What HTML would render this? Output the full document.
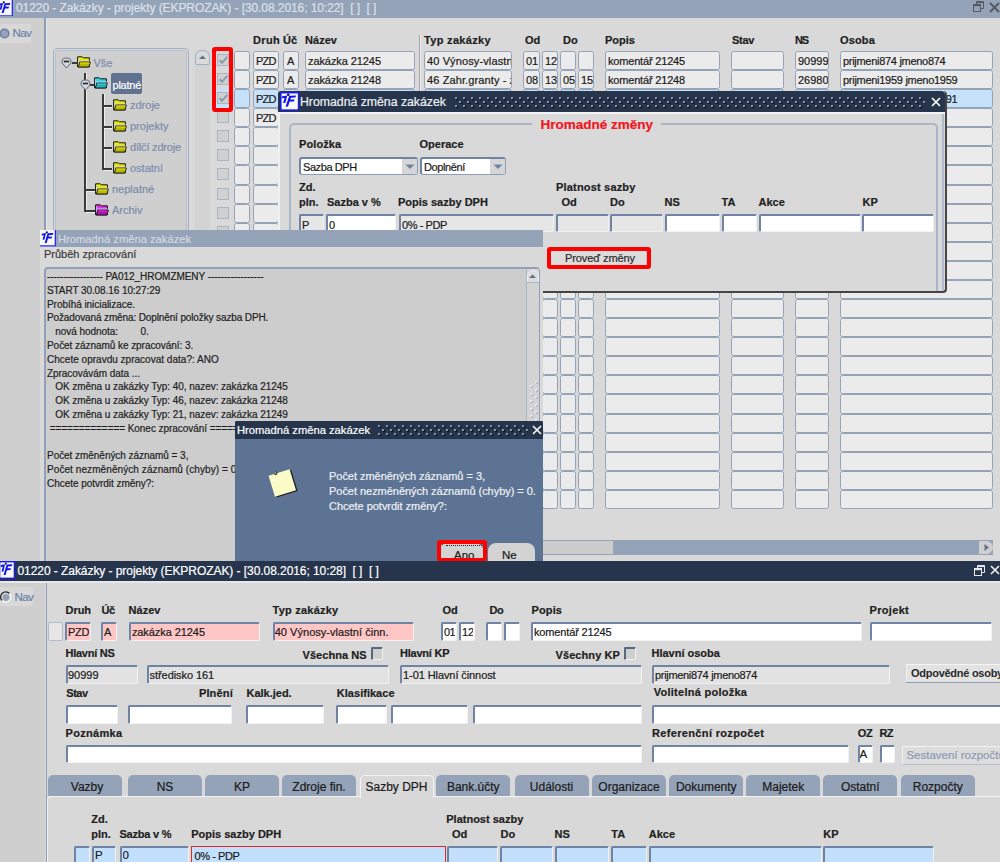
<!DOCTYPE html>
<html><head><meta charset="utf-8"><title>Zakázky</title>
<style>
html,body{margin:0;padding:0;width:1000px;height:862px;overflow:hidden;background:#d9d9d9;}
body{position:relative;font-family:"Liberation Sans", sans-serif;}
body>div,body>svg{position:absolute;}
.t{white-space:nowrap;-webkit-text-stroke:0.2px currentColor;}
.gf{border:1px solid;border-radius:2.5px;}
.if{border-style:solid;border-width:2px 1px 1px 2px;border-color:#6f84a4 #f2f2f2 #f2f2f2 #6f84a4;border-radius:2px;}
</style></head><body>
<div style="left:0px;top:0px;width:1000px;height:862px;background:#d9d9d9"></div>
<div style="left:0px;top:-2px;width:1000px;height:20px;background:#94a3b8"></div>
<svg style="position:absolute;left:-3px;top:-0.5px" width="16" height="16.6" viewBox="0 0 16 16.6" preserveAspectRatio="none"><rect x="0" y="0" width="16" height="16.6" fill="#f6f6f2"/><path d="M15.35 0 V15.95 H0" stroke="#2a2af0" stroke-width="1.3" fill="none"/><circle cx="6.8" cy="2.4" r="1.05" fill="#0c0c50"/><path d="M1.8 3.7 L6.0 3.1 L4.5 9.6 L2.5 9.8 L3.8 5.3 L1.6 5.5Z" fill="#1212ee"/><path d="M7.6 3.3 L13.3 3.1 L12.7 4.9 L9.0 5.0 L8.5 6.7 L12.0 6.6 L11.5 8.4 L8.0 8.5 L6.6 12.9 L4.6 13.0Z" fill="#1212ee"/></svg>
<div class="t" style="left:16px;top:2.04px;font-size:12px;line-height:12px;color:#dce1e8;letter-spacing:-0.077px;">01220 - Zakázky - projekty (EKPROZAK) - [30.08.2016; 10:22]&nbsp; [ ]&nbsp; [ ]</div>
<svg style="position:absolute;left:973px;top:1px" width="11" height="11"><path d="M3.5 3 V0.5 H10.5 V7.5 H8" stroke="#565a62" stroke-width="1" fill="none"/><path d="M3.5 1.5 H10.5" stroke="#565a62" stroke-width="1.2"/><rect x="0.5" y="3.5" width="7" height="7" stroke="#565a62" fill="none"/><path d="M0.5 4.6 H7.5" stroke="#565a62" stroke-width="1.2"/></svg>
<svg style="position:absolute;left:989px;top:2px" width="11" height="11"><path d="M1 1 L10 10 M10 1 L1 10" stroke="#565a62" stroke-width="2"/></svg>
<div style="left:0px;top:18px;width:44px;height:543px;background:#cfcfcf"></div>
<div style="left:44px;top:18px;width:2px;height:543px;background:#8d9db5"></div>
<div style="left:46px;top:18px;width:1px;height:543px;background:#e6e6e6"></div>
<div style="left:0px;top:24px;width:31px;height:19px;background:#d8d8d8"></div>
<svg style="position:absolute;left:-1px;top:28px" width="11" height="11"><circle cx="5.5" cy="5.5" r="4.3" fill="#94a3b8" stroke="#6a7fa0" stroke-width="1.4"/></svg>
<div class="t" style="left:12.5px;top:28.27px;font-size:11.5px;line-height:11.5px;color:#6b82a8;letter-spacing:-0.651px;">Nav</div>
<div style="left:53px;top:48px;width:136px;height:200px;border:1px solid #9fb0c6;border-radius:4px;box-sizing:border-box;"></div>
<div style="left:55px;top:50px;width:132px;height:196px;border:1px solid #b4c0d0;border-radius:3px;box-sizing:border-box;background:#cfcfcf"></div>
<svg style="position:absolute;left:61px;top:57px" width="11" height="12" viewBox="0 0 11 12"><path d="M1 4.5 Q1 1 5.5 1 Q10 1 10 4.5 V6 L5.5 11 L1 6Z" fill="#d5d5d5" stroke="#566a88" stroke-width="1"/><path d="M2.8 4.5 H8.2" stroke="#222" stroke-width="1.6"/></svg>
<div style="left:72px;top:62px;width:5px;height:2px;background:#3a3a3a"></div>
<svg style="position:absolute;left:77px;top:56px" width="14" height="12" viewBox="0 0 14 12"><path d="M0.6 0.8 H5.2 L6.2 1.8 H12.4 V10.9 H0.6Z" fill="#e8e800" stroke="#151515" stroke-width="1"/><path d="M1.6 2.4 V9" stroke="#c8c8ff" stroke-width="0.9"/><path d="M2.6 5.2 H12.8" stroke="#d4d4ff" stroke-width="1.3"/><path d="M2.8 6 H13.4 L11.9 11 H1.4Z" fill="#b8b800" stroke="#151515" stroke-width="0.9"/><path d="M3 7 H12.6" stroke="#e8e800" stroke-width="1"/></svg>
<div class="t" style="left:93.5px;top:57.89px;font-size:11px;line-height:11px;color:#7b8cab;">Vše</div>
<div style="left:84px;top:73px;width:2px;height:139px;background:#3a3a3a;box-shadow:1px 0 0 #f0f0f0"></div>
<svg style="position:absolute;left:80px;top:79px" width="11" height="12" viewBox="0 0 11 12"><path d="M1 4.5 Q1 1 5.5 1 Q10 1 10 4.5 V6 L5.5 11 L1 6Z" fill="#d5d5d5" stroke="#566a88" stroke-width="1"/><path d="M2.8 4.5 H8.2" stroke="#222" stroke-width="1.6"/></svg>
<div style="left:90px;top:84px;width:4px;height:2px;background:#3a3a3a"></div>
<svg style="position:absolute;left:94px;top:77px" width="14" height="12" viewBox="0 0 14 12"><path d="M0.6 0.8 H5.2 L6.2 1.8 H12.4 V10.9 H0.6Z" fill="#30d8e0" stroke="#151515" stroke-width="1"/><path d="M1.6 2.4 V9" stroke="#c8c8ff" stroke-width="0.9"/><path d="M2.6 5.2 H12.8" stroke="#d4d4ff" stroke-width="1.3"/><path d="M2.8 6 H13.4 L11.9 11 H1.4Z" fill="#20b0b8" stroke="#151515" stroke-width="0.9"/><path d="M3 7 H12.6" stroke="#30d8e0" stroke-width="1"/></svg>
<div style="left:111px;top:73px;width:31px;height:21px;background:#60728f;border-radius:2px"></div>
<div class="t" style="left:112.5px;top:79.69px;font-size:11px;line-height:11px;color:#ffffff;letter-spacing:-0.233px;">platné</div>
<div style="left:102px;top:94px;width:2px;height:76px;background:#3a3a3a;box-shadow:1px 0 0 #f0f0f0"></div>
<div style="left:104px;top:105px;width:8px;height:2px;background:#3a3a3a;box-shadow:0 1px 0 #f0f0f0"></div>
<svg style="position:absolute;left:113px;top:99px" width="14" height="12" viewBox="0 0 14 12"><path d="M0.6 0.8 H5.2 L6.2 1.8 H12.4 V10.9 H0.6Z" fill="#e8e800" stroke="#151515" stroke-width="1"/><path d="M1.6 2.4 V9" stroke="#c8c8ff" stroke-width="0.9"/><path d="M2.6 5.2 H12.8" stroke="#d4d4ff" stroke-width="1.3"/><path d="M2.8 6 H13.4 L11.9 11 H1.4Z" fill="#b8b800" stroke="#151515" stroke-width="0.9"/><path d="M3 7 H12.6" stroke="#e8e800" stroke-width="1"/></svg>
<div class="t" style="left:130px;top:100.19px;font-size:11px;line-height:11px;color:#7b8cab;">zdroje</div>
<div style="left:104px;top:126px;width:8px;height:2px;background:#3a3a3a;box-shadow:0 1px 0 #f0f0f0"></div>
<svg style="position:absolute;left:113px;top:120px" width="14" height="12" viewBox="0 0 14 12"><path d="M0.6 0.8 H5.2 L6.2 1.8 H12.4 V10.9 H0.6Z" fill="#e8e800" stroke="#151515" stroke-width="1"/><path d="M1.6 2.4 V9" stroke="#c8c8ff" stroke-width="0.9"/><path d="M2.6 5.2 H12.8" stroke="#d4d4ff" stroke-width="1.3"/><path d="M2.8 6 H13.4 L11.9 11 H1.4Z" fill="#b8b800" stroke="#151515" stroke-width="0.9"/><path d="M3 7 H12.6" stroke="#e8e800" stroke-width="1"/></svg>
<div class="t" style="left:130px;top:121.19px;font-size:11px;line-height:11px;color:#7b8cab;">projekty</div>
<div style="left:104px;top:147px;width:8px;height:2px;background:#3a3a3a;box-shadow:0 1px 0 #f0f0f0"></div>
<svg style="position:absolute;left:113px;top:141px" width="14" height="12" viewBox="0 0 14 12"><path d="M0.6 0.8 H5.2 L6.2 1.8 H12.4 V10.9 H0.6Z" fill="#e8e800" stroke="#151515" stroke-width="1"/><path d="M1.6 2.4 V9" stroke="#c8c8ff" stroke-width="0.9"/><path d="M2.6 5.2 H12.8" stroke="#d4d4ff" stroke-width="1.3"/><path d="M2.8 6 H13.4 L11.9 11 H1.4Z" fill="#b8b800" stroke="#151515" stroke-width="0.9"/><path d="M3 7 H12.6" stroke="#e8e800" stroke-width="1"/></svg>
<div class="t" style="left:130px;top:142.19px;font-size:11px;line-height:11px;color:#7b8cab;letter-spacing:-0.185px;">dílčí zdroje</div>
<div style="left:104px;top:168px;width:8px;height:2px;background:#3a3a3a;box-shadow:0 1px 0 #f0f0f0"></div>
<svg style="position:absolute;left:113px;top:162px" width="14" height="12" viewBox="0 0 14 12"><path d="M0.6 0.8 H5.2 L6.2 1.8 H12.4 V10.9 H0.6Z" fill="#e8e800" stroke="#151515" stroke-width="1"/><path d="M1.6 2.4 V9" stroke="#c8c8ff" stroke-width="0.9"/><path d="M2.6 5.2 H12.8" stroke="#d4d4ff" stroke-width="1.3"/><path d="M2.8 6 H13.4 L11.9 11 H1.4Z" fill="#b8b800" stroke="#151515" stroke-width="0.9"/><path d="M3 7 H12.6" stroke="#e8e800" stroke-width="1"/></svg>
<div class="t" style="left:130px;top:163.19px;font-size:11px;line-height:11px;color:#7b8cab;">ostatní</div>
<div style="left:86px;top:189px;width:9px;height:2px;background:#3a3a3a;box-shadow:0 1px 0 #f0f0f0"></div>
<svg style="position:absolute;left:95px;top:183px" width="14" height="12" viewBox="0 0 14 12"><path d="M0.6 0.8 H5.2 L6.2 1.8 H12.4 V10.9 H0.6Z" fill="#e8e800" stroke="#151515" stroke-width="1"/><path d="M1.6 2.4 V9" stroke="#c8c8ff" stroke-width="0.9"/><path d="M2.6 5.2 H12.8" stroke="#d4d4ff" stroke-width="1.3"/><path d="M2.8 6 H13.4 L11.9 11 H1.4Z" fill="#b8b800" stroke="#151515" stroke-width="0.9"/><path d="M3 7 H12.6" stroke="#e8e800" stroke-width="1"/></svg>
<div class="t" style="left:112px;top:184.19px;font-size:11px;line-height:11px;color:#7b8cab;">neplatné</div>
<div style="left:86px;top:210px;width:9px;height:2px;background:#3a3a3a;box-shadow:0 1px 0 #f0f0f0"></div>
<svg style="position:absolute;left:95px;top:204px" width="14" height="12" viewBox="0 0 14 12"><path d="M0.6 0.8 H5.2 L6.2 1.8 H12.4 V10.9 H0.6Z" fill="#e030e0" stroke="#151515" stroke-width="1"/><path d="M1.6 2.4 V9" stroke="#c8c8ff" stroke-width="0.9"/><path d="M2.6 5.2 H12.8" stroke="#d4d4ff" stroke-width="1.3"/><path d="M2.8 6 H13.4 L11.9 11 H1.4Z" fill="#b010b0" stroke="#151515" stroke-width="0.9"/><path d="M3 7 H12.6" stroke="#e030e0" stroke-width="1"/></svg>
<div class="t" style="left:112px;top:205.19px;font-size:11px;line-height:11px;color:#7b8cab;">Archiv</div>
<div style="left:195px;top:50px;width:15px;height:500px;background:#d3d3d3"></div>
<div style="left:195px;top:50px;width:15px;height:15px;background:#dadada;border:1px solid #9fb0c6;border-radius:7px 7px 2px 2px;box-sizing:border-box"></div>
<svg style="position:absolute;left:198px;top:53px" width="9" height="9"><path d="M1 6 L4.5 2.5 L8 6Z" fill="#60728f"/></svg>
<div class="t" style="left:253px;top:34.69px;font-size:11px;line-height:11px;font-weight:bold;color:#1e1e1e;letter-spacing:0.336px;">Druh</div>
<div class="t" style="left:283px;top:34.69px;font-size:11px;line-height:11px;font-weight:bold;color:#1e1e1e;letter-spacing:-0.031px;">Úč</div>
<div class="t" style="left:305px;top:34.69px;font-size:11px;line-height:11px;font-weight:bold;color:#1e1e1e;letter-spacing:0.037px;">Název</div>
<div class="t" style="left:424px;top:34.69px;font-size:11px;line-height:11px;font-weight:bold;color:#1e1e1e;letter-spacing:0.324px;">Typ zakázky</div>
<div class="t" style="left:525px;top:34.69px;font-size:11px;line-height:11px;font-weight:bold;color:#1e1e1e;letter-spacing:-0.141px;">Od</div>
<div class="t" style="left:563px;top:34.69px;font-size:11px;line-height:11px;font-weight:bold;color:#1e1e1e;letter-spacing:0.172px;">Do</div>
<div class="t" style="left:605px;top:34.69px;font-size:11px;line-height:11px;font-weight:bold;color:#1e1e1e;letter-spacing:0.006px;">Popis</div>
<div class="t" style="left:732px;top:34.69px;font-size:11px;line-height:11px;font-weight:bold;color:#1e1e1e;letter-spacing:-0.312px;">Stav</div>
<div class="t" style="left:795px;top:34.69px;font-size:11px;line-height:11px;font-weight:bold;color:#1e1e1e;letter-spacing:-1.141px;">NS</div>
<div class="t" style="left:840px;top:34.69px;font-size:11px;line-height:11px;font-weight:bold;color:#1e1e1e;letter-spacing:0.150px;">Osoba</div>
<div style="left:419px;top:35px;width:1px;height:260px;background:#a6a6a6"></div>
<div style="left:420px;top:35px;width:1px;height:260px;background:#efefef"></div>
<div style="left:217px;top:54px;width:12px;height:12px;border:1px solid #a9b5c6;box-sizing:border-box;background:#d0d0d0"></div>
<svg style="position:absolute;left:217px;top:54px" width="12" height="12"><path d="M2.6 6.2 L5 8.8 L10.2 2.8" stroke="#8a9ab2" stroke-width="2" fill="none"/></svg>
<div class="gf" style="left:234px;top:51px;width:14px;height:17px;background:#ebebeb;border-color:#94a3b8"></div>
<div class="gf" style="left:253px;top:51px;width:24px;height:17px;background:#ebebeb;border-color:#94a3b8"></div>
<div class="t" style="left:256px;top:56.29px;font-size:11px;line-height:11px;color:#1a1a1a;width:22px;overflow:hidden;letter-spacing:-0.833px;">PZD</div>
<div class="gf" style="left:283px;top:51px;width:14px;height:17px;background:#ebebeb;border-color:#94a3b8"></div>
<div class="t" style="left:287px;top:56.29px;font-size:11px;line-height:11px;color:#1a1a1a;width:11px;overflow:hidden;">A</div>
<div class="gf" style="left:305px;top:51px;width:108px;height:17px;background:#ebebeb;border-color:#94a3b8"></div>
<div class="t" style="left:308px;top:56.29px;font-size:11px;line-height:11px;color:#1a1a1a;width:106px;overflow:hidden;letter-spacing:-0.082px;">zakázka 21245</div>
<div class="gf" style="left:424px;top:51px;width:86px;height:17px;background:#ebebeb;border-color:#94a3b8"></div>
<div class="t" style="left:427px;top:56.29px;font-size:11px;line-height:11px;color:#1a1a1a;width:84px;overflow:hidden;letter-spacing:0.121px;">40 Výnosy-vlastní činn.</div>
<div class="gf" style="left:523px;top:51px;width:15px;height:17px;background:#ebebeb;border-color:#94a3b8"></div>
<div class="t" style="left:526px;top:56.29px;font-size:11px;line-height:11px;color:#1a1a1a;width:13px;overflow:hidden;">01</div>
<div class="gf" style="left:542px;top:51px;width:14px;height:17px;background:#ebebeb;border-color:#94a3b8"></div>
<div class="t" style="left:545px;top:56.29px;font-size:11px;line-height:11px;color:#1a1a1a;width:12px;overflow:hidden;">12</div>
<div class="gf" style="left:560px;top:51px;width:14px;height:17px;background:#ebebeb;border-color:#94a3b8"></div>
<div class="gf" style="left:578px;top:51px;width:14px;height:17px;background:#ebebeb;border-color:#94a3b8"></div>
<div class="gf" style="left:605px;top:51px;width:113px;height:17px;background:#ebebeb;border-color:#94a3b8"></div>
<div class="t" style="left:608px;top:56.29px;font-size:11px;line-height:11px;color:#1a1a1a;width:111px;overflow:hidden;letter-spacing:-0.183px;">komentář 21245</div>
<div class="gf" style="left:731px;top:51px;width:51px;height:17px;background:#ebebeb;border-color:#94a3b8"></div>
<div class="gf" style="left:795px;top:51px;width:32px;height:17px;background:#ebebeb;border-color:#94a3b8"></div>
<div class="t" style="left:798px;top:56.29px;font-size:11px;line-height:11px;color:#1a1a1a;width:30px;overflow:hidden;">90999</div>
<div class="gf" style="left:840px;top:51px;width:151px;height:17px;background:#ebebeb;border-color:#94a3b8"></div>
<div class="t" style="left:843px;top:56.29px;font-size:11px;line-height:11px;color:#1a1a1a;width:149px;overflow:hidden;letter-spacing:-0.294px;">prijmeni874 jmeno874</div>
<div style="left:217px;top:73px;width:12px;height:12px;border:1px solid #a9b5c6;box-sizing:border-box;background:#d0d0d0"></div>
<svg style="position:absolute;left:217px;top:73px" width="12" height="12"><path d="M2.6 6.2 L5 8.8 L10.2 2.8" stroke="#8a9ab2" stroke-width="2" fill="none"/></svg>
<div class="gf" style="left:234px;top:70px;width:14px;height:17px;background:#ebebeb;border-color:#94a3b8"></div>
<div class="gf" style="left:253px;top:70px;width:24px;height:17px;background:#ebebeb;border-color:#94a3b8"></div>
<div class="t" style="left:256px;top:75.29px;font-size:11px;line-height:11px;color:#1a1a1a;width:22px;overflow:hidden;letter-spacing:-0.833px;">PZD</div>
<div class="gf" style="left:283px;top:70px;width:14px;height:17px;background:#ebebeb;border-color:#94a3b8"></div>
<div class="t" style="left:287px;top:75.29px;font-size:11px;line-height:11px;color:#1a1a1a;width:11px;overflow:hidden;">A</div>
<div class="gf" style="left:305px;top:70px;width:108px;height:17px;background:#ebebeb;border-color:#94a3b8"></div>
<div class="t" style="left:308px;top:75.29px;font-size:11px;line-height:11px;color:#1a1a1a;width:106px;overflow:hidden;letter-spacing:-0.082px;">zakázka 21248</div>
<div class="gf" style="left:424px;top:70px;width:86px;height:17px;background:#ebebeb;border-color:#94a3b8"></div>
<div class="t" style="left:427px;top:75.29px;font-size:11px;line-height:11px;color:#1a1a1a;width:84px;overflow:hidden;letter-spacing:0.112px;">46 Zahr.granty - zahr.</div>
<div class="gf" style="left:523px;top:70px;width:15px;height:17px;background:#ebebeb;border-color:#94a3b8"></div>
<div class="t" style="left:526px;top:75.29px;font-size:11px;line-height:11px;color:#1a1a1a;width:13px;overflow:hidden;">08</div>
<div class="gf" style="left:542px;top:70px;width:14px;height:17px;background:#ebebeb;border-color:#94a3b8"></div>
<div class="t" style="left:545px;top:75.29px;font-size:11px;line-height:11px;color:#1a1a1a;width:12px;overflow:hidden;">13</div>
<div class="gf" style="left:560px;top:70px;width:14px;height:17px;background:#ebebeb;border-color:#94a3b8"></div>
<div class="t" style="left:563px;top:75.29px;font-size:11px;line-height:11px;color:#1a1a1a;width:12px;overflow:hidden;">05</div>
<div class="gf" style="left:578px;top:70px;width:14px;height:17px;background:#ebebeb;border-color:#94a3b8"></div>
<div class="t" style="left:581px;top:75.29px;font-size:11px;line-height:11px;color:#1a1a1a;width:12px;overflow:hidden;">15</div>
<div class="gf" style="left:605px;top:70px;width:113px;height:17px;background:#ebebeb;border-color:#94a3b8"></div>
<div class="t" style="left:608px;top:75.29px;font-size:11px;line-height:11px;color:#1a1a1a;width:111px;overflow:hidden;letter-spacing:-0.183px;">komentář 21248</div>
<div class="gf" style="left:731px;top:70px;width:51px;height:17px;background:#ebebeb;border-color:#94a3b8"></div>
<div class="gf" style="left:795px;top:70px;width:32px;height:17px;background:#ebebeb;border-color:#94a3b8"></div>
<div class="t" style="left:798px;top:75.29px;font-size:11px;line-height:11px;color:#1a1a1a;width:30px;overflow:hidden;">26980</div>
<div class="gf" style="left:840px;top:70px;width:151px;height:17px;background:#ebebeb;border-color:#94a3b8"></div>
<div class="t" style="left:843px;top:75.29px;font-size:11px;line-height:11px;color:#1a1a1a;width:149px;overflow:hidden;letter-spacing:-0.279px;">prijmeni1959 jmeno1959</div>
<div style="left:214px;top:89px;width:18px;height:19px;background:#c6e2fb"></div>
<div style="left:217px;top:92px;width:12px;height:12px;border:1px solid #a9b5c6;box-sizing:border-box;background:#d0d0d0"></div>
<svg style="position:absolute;left:217px;top:92px" width="12" height="12"><path d="M2.6 6.2 L5 8.8 L10.2 2.8" stroke="#8a9ab2" stroke-width="2" fill="none"/></svg>
<div class="gf" style="left:234px;top:89px;width:14px;height:17px;background:#c6e2fb;border-color:#94a3b8"></div>
<div class="gf" style="left:253px;top:89px;width:24px;height:17px;background:#c6e2fb;border-color:#94a3b8"></div>
<div class="t" style="left:256px;top:94.29px;font-size:11px;line-height:11px;color:#1a1a1a;width:22px;overflow:hidden;letter-spacing:-0.833px;">PZD</div>
<div class="gf" style="left:283px;top:89px;width:14px;height:17px;background:#c6e2fb;border-color:#94a3b8"></div>
<div class="t" style="left:287px;top:94.29px;font-size:11px;line-height:11px;color:#1a1a1a;width:11px;overflow:hidden;">A</div>
<div class="gf" style="left:305px;top:89px;width:108px;height:17px;background:#c6e2fb;border-color:#94a3b8"></div>
<div class="t" style="left:308px;top:94.29px;font-size:11px;line-height:11px;color:#1a1a1a;width:106px;overflow:hidden;letter-spacing:-0.082px;">zakázka 21249</div>
<div class="gf" style="left:424px;top:89px;width:86px;height:17px;background:#c6e2fb;border-color:#94a3b8"></div>
<div class="t" style="left:427px;top:94.29px;font-size:11px;line-height:11px;color:#1a1a1a;width:84px;overflow:hidden;">21 Dotace</div>
<div class="gf" style="left:523px;top:89px;width:15px;height:17px;background:#c6e2fb;border-color:#94a3b8"></div>
<div class="t" style="left:526px;top:94.29px;font-size:11px;line-height:11px;color:#1a1a1a;width:13px;overflow:hidden;">01</div>
<div class="gf" style="left:542px;top:89px;width:14px;height:17px;background:#c6e2fb;border-color:#94a3b8"></div>
<div class="t" style="left:545px;top:94.29px;font-size:11px;line-height:11px;color:#1a1a1a;width:12px;overflow:hidden;">12</div>
<div class="gf" style="left:560px;top:89px;width:14px;height:17px;background:#c6e2fb;border-color:#94a3b8"></div>
<div class="gf" style="left:578px;top:89px;width:14px;height:17px;background:#c6e2fb;border-color:#94a3b8"></div>
<div class="gf" style="left:605px;top:89px;width:113px;height:17px;background:#c6e2fb;border-color:#94a3b8"></div>
<div class="t" style="left:608px;top:94.29px;font-size:11px;line-height:11px;color:#1a1a1a;width:111px;overflow:hidden;letter-spacing:-0.183px;">komentář 21249</div>
<div class="gf" style="left:731px;top:89px;width:51px;height:17px;background:#c6e2fb;border-color:#94a3b8"></div>
<div class="gf" style="left:795px;top:89px;width:32px;height:17px;background:#c6e2fb;border-color:#94a3b8"></div>
<div class="t" style="left:798px;top:94.29px;font-size:11px;line-height:11px;color:#1a1a1a;width:30px;overflow:hidden;">11111</div>
<div class="gf" style="left:840px;top:89px;width:151px;height:17px;background:#c6e2fb;border-color:#94a3b8"></div>
<div class="t" style="left:843px;top:94.29px;font-size:11px;line-height:11px;color:#1a1a1a;width:149px;overflow:hidden;letter-spacing:-0.279px;">prijmeni1591 jmeno1591</div>
<div style="left:217px;top:111px;width:12px;height:12px;border:1px solid #a9b5c6;box-sizing:border-box;background:#d0d0d0"></div>
<div class="gf" style="left:234px;top:108px;width:14px;height:17px;background:#ebebeb;border-color:#94a3b8"></div>
<div class="gf" style="left:253px;top:108px;width:24px;height:17px;background:#ebebeb;border-color:#94a3b8"></div>
<div class="t" style="left:256px;top:113.29px;font-size:11px;line-height:11px;color:#1a1a1a;width:22px;overflow:hidden;letter-spacing:-0.833px;">PZD</div>
<div class="gf" style="left:283px;top:108px;width:14px;height:17px;background:#ebebeb;border-color:#94a3b8"></div>
<div class="gf" style="left:305px;top:108px;width:108px;height:17px;background:#ebebeb;border-color:#94a3b8"></div>
<div class="gf" style="left:424px;top:108px;width:86px;height:17px;background:#ebebeb;border-color:#94a3b8"></div>
<div class="gf" style="left:523px;top:108px;width:15px;height:17px;background:#ebebeb;border-color:#94a3b8"></div>
<div class="gf" style="left:542px;top:108px;width:14px;height:17px;background:#ebebeb;border-color:#94a3b8"></div>
<div class="gf" style="left:560px;top:108px;width:14px;height:17px;background:#ebebeb;border-color:#94a3b8"></div>
<div class="gf" style="left:578px;top:108px;width:14px;height:17px;background:#ebebeb;border-color:#94a3b8"></div>
<div class="gf" style="left:605px;top:108px;width:113px;height:17px;background:#ebebeb;border-color:#94a3b8"></div>
<div class="gf" style="left:731px;top:108px;width:51px;height:17px;background:#ebebeb;border-color:#94a3b8"></div>
<div class="gf" style="left:795px;top:108px;width:32px;height:17px;background:#ebebeb;border-color:#94a3b8"></div>
<div class="gf" style="left:840px;top:108px;width:151px;height:17px;background:#ebebeb;border-color:#94a3b8"></div>
<div style="left:217px;top:130px;width:12px;height:12px;border:1px solid #a9b5c6;box-sizing:border-box;background:#d0d0d0"></div>
<div class="gf" style="left:234px;top:127px;width:14px;height:17px;background:#ebebeb;border-color:#94a3b8"></div>
<div class="gf" style="left:253px;top:127px;width:24px;height:17px;background:#ebebeb;border-color:#94a3b8"></div>
<div class="gf" style="left:283px;top:127px;width:14px;height:17px;background:#ebebeb;border-color:#94a3b8"></div>
<div class="gf" style="left:305px;top:127px;width:108px;height:17px;background:#ebebeb;border-color:#94a3b8"></div>
<div class="gf" style="left:424px;top:127px;width:86px;height:17px;background:#ebebeb;border-color:#94a3b8"></div>
<div class="gf" style="left:523px;top:127px;width:15px;height:17px;background:#ebebeb;border-color:#94a3b8"></div>
<div class="gf" style="left:542px;top:127px;width:14px;height:17px;background:#ebebeb;border-color:#94a3b8"></div>
<div class="gf" style="left:560px;top:127px;width:14px;height:17px;background:#ebebeb;border-color:#94a3b8"></div>
<div class="gf" style="left:578px;top:127px;width:14px;height:17px;background:#ebebeb;border-color:#94a3b8"></div>
<div class="gf" style="left:605px;top:127px;width:113px;height:17px;background:#ebebeb;border-color:#94a3b8"></div>
<div class="gf" style="left:731px;top:127px;width:51px;height:17px;background:#ebebeb;border-color:#94a3b8"></div>
<div class="gf" style="left:795px;top:127px;width:32px;height:17px;background:#ebebeb;border-color:#94a3b8"></div>
<div class="gf" style="left:840px;top:127px;width:151px;height:17px;background:#ebebeb;border-color:#94a3b8"></div>
<div style="left:217px;top:149px;width:12px;height:12px;border:1px solid #a9b5c6;box-sizing:border-box;background:#d0d0d0"></div>
<div class="gf" style="left:234px;top:146px;width:14px;height:17px;background:#ebebeb;border-color:#94a3b8"></div>
<div class="gf" style="left:253px;top:146px;width:24px;height:17px;background:#ebebeb;border-color:#94a3b8"></div>
<div class="gf" style="left:283px;top:146px;width:14px;height:17px;background:#ebebeb;border-color:#94a3b8"></div>
<div class="gf" style="left:305px;top:146px;width:108px;height:17px;background:#ebebeb;border-color:#94a3b8"></div>
<div class="gf" style="left:424px;top:146px;width:86px;height:17px;background:#ebebeb;border-color:#94a3b8"></div>
<div class="gf" style="left:523px;top:146px;width:15px;height:17px;background:#ebebeb;border-color:#94a3b8"></div>
<div class="gf" style="left:542px;top:146px;width:14px;height:17px;background:#ebebeb;border-color:#94a3b8"></div>
<div class="gf" style="left:560px;top:146px;width:14px;height:17px;background:#ebebeb;border-color:#94a3b8"></div>
<div class="gf" style="left:578px;top:146px;width:14px;height:17px;background:#ebebeb;border-color:#94a3b8"></div>
<div class="gf" style="left:605px;top:146px;width:113px;height:17px;background:#ebebeb;border-color:#94a3b8"></div>
<div class="gf" style="left:731px;top:146px;width:51px;height:17px;background:#ebebeb;border-color:#94a3b8"></div>
<div class="gf" style="left:795px;top:146px;width:32px;height:17px;background:#ebebeb;border-color:#94a3b8"></div>
<div class="gf" style="left:840px;top:146px;width:151px;height:17px;background:#ebebeb;border-color:#94a3b8"></div>
<div style="left:217px;top:168px;width:12px;height:12px;border:1px solid #a9b5c6;box-sizing:border-box;background:#d0d0d0"></div>
<div class="gf" style="left:234px;top:165px;width:14px;height:18px;background:#ebebeb;border-color:#94a3b8"></div>
<div class="gf" style="left:253px;top:165px;width:24px;height:18px;background:#ebebeb;border-color:#94a3b8"></div>
<div class="gf" style="left:283px;top:165px;width:14px;height:18px;background:#ebebeb;border-color:#94a3b8"></div>
<div class="gf" style="left:305px;top:165px;width:108px;height:18px;background:#ebebeb;border-color:#94a3b8"></div>
<div class="gf" style="left:424px;top:165px;width:86px;height:18px;background:#ebebeb;border-color:#94a3b8"></div>
<div class="gf" style="left:523px;top:165px;width:15px;height:18px;background:#ebebeb;border-color:#94a3b8"></div>
<div class="gf" style="left:542px;top:165px;width:14px;height:18px;background:#ebebeb;border-color:#94a3b8"></div>
<div class="gf" style="left:560px;top:165px;width:14px;height:18px;background:#ebebeb;border-color:#94a3b8"></div>
<div class="gf" style="left:578px;top:165px;width:14px;height:18px;background:#ebebeb;border-color:#94a3b8"></div>
<div class="gf" style="left:605px;top:165px;width:113px;height:18px;background:#ebebeb;border-color:#94a3b8"></div>
<div class="gf" style="left:731px;top:165px;width:51px;height:18px;background:#ebebeb;border-color:#94a3b8"></div>
<div class="gf" style="left:795px;top:165px;width:32px;height:18px;background:#ebebeb;border-color:#94a3b8"></div>
<div class="gf" style="left:840px;top:165px;width:151px;height:18px;background:#ebebeb;border-color:#94a3b8"></div>
<div style="left:217px;top:188px;width:12px;height:12px;border:1px solid #a9b5c6;box-sizing:border-box;background:#d0d0d0"></div>
<div class="gf" style="left:234px;top:185px;width:14px;height:17px;background:#ebebeb;border-color:#94a3b8"></div>
<div class="gf" style="left:253px;top:185px;width:24px;height:17px;background:#ebebeb;border-color:#94a3b8"></div>
<div class="gf" style="left:283px;top:185px;width:14px;height:17px;background:#ebebeb;border-color:#94a3b8"></div>
<div class="gf" style="left:305px;top:185px;width:108px;height:17px;background:#ebebeb;border-color:#94a3b8"></div>
<div class="gf" style="left:424px;top:185px;width:86px;height:17px;background:#ebebeb;border-color:#94a3b8"></div>
<div class="gf" style="left:523px;top:185px;width:15px;height:17px;background:#ebebeb;border-color:#94a3b8"></div>
<div class="gf" style="left:542px;top:185px;width:14px;height:17px;background:#ebebeb;border-color:#94a3b8"></div>
<div class="gf" style="left:560px;top:185px;width:14px;height:17px;background:#ebebeb;border-color:#94a3b8"></div>
<div class="gf" style="left:578px;top:185px;width:14px;height:17px;background:#ebebeb;border-color:#94a3b8"></div>
<div class="gf" style="left:605px;top:185px;width:113px;height:17px;background:#ebebeb;border-color:#94a3b8"></div>
<div class="gf" style="left:731px;top:185px;width:51px;height:17px;background:#ebebeb;border-color:#94a3b8"></div>
<div class="gf" style="left:795px;top:185px;width:32px;height:17px;background:#ebebeb;border-color:#94a3b8"></div>
<div class="gf" style="left:840px;top:185px;width:151px;height:17px;background:#ebebeb;border-color:#94a3b8"></div>
<div style="left:217px;top:207px;width:12px;height:12px;border:1px solid #a9b5c6;box-sizing:border-box;background:#d0d0d0"></div>
<div class="gf" style="left:234px;top:204px;width:14px;height:17px;background:#ebebeb;border-color:#94a3b8"></div>
<div class="gf" style="left:253px;top:204px;width:24px;height:17px;background:#ebebeb;border-color:#94a3b8"></div>
<div class="gf" style="left:283px;top:204px;width:14px;height:17px;background:#ebebeb;border-color:#94a3b8"></div>
<div class="gf" style="left:305px;top:204px;width:108px;height:17px;background:#ebebeb;border-color:#94a3b8"></div>
<div class="gf" style="left:424px;top:204px;width:86px;height:17px;background:#ebebeb;border-color:#94a3b8"></div>
<div class="gf" style="left:523px;top:204px;width:15px;height:17px;background:#ebebeb;border-color:#94a3b8"></div>
<div class="gf" style="left:542px;top:204px;width:14px;height:17px;background:#ebebeb;border-color:#94a3b8"></div>
<div class="gf" style="left:560px;top:204px;width:14px;height:17px;background:#ebebeb;border-color:#94a3b8"></div>
<div class="gf" style="left:578px;top:204px;width:14px;height:17px;background:#ebebeb;border-color:#94a3b8"></div>
<div class="gf" style="left:605px;top:204px;width:113px;height:17px;background:#ebebeb;border-color:#94a3b8"></div>
<div class="gf" style="left:731px;top:204px;width:51px;height:17px;background:#ebebeb;border-color:#94a3b8"></div>
<div class="gf" style="left:795px;top:204px;width:32px;height:17px;background:#ebebeb;border-color:#94a3b8"></div>
<div class="gf" style="left:840px;top:204px;width:151px;height:17px;background:#ebebeb;border-color:#94a3b8"></div>
<div style="left:217px;top:226px;width:12px;height:12px;border:1px solid #a9b5c6;box-sizing:border-box;background:#d0d0d0"></div>
<div class="gf" style="left:234px;top:223px;width:14px;height:17px;background:#ebebeb;border-color:#94a3b8"></div>
<div class="gf" style="left:253px;top:223px;width:24px;height:17px;background:#ebebeb;border-color:#94a3b8"></div>
<div class="gf" style="left:283px;top:223px;width:14px;height:17px;background:#ebebeb;border-color:#94a3b8"></div>
<div class="gf" style="left:305px;top:223px;width:108px;height:17px;background:#ebebeb;border-color:#94a3b8"></div>
<div class="gf" style="left:424px;top:223px;width:86px;height:17px;background:#ebebeb;border-color:#94a3b8"></div>
<div class="gf" style="left:523px;top:223px;width:15px;height:17px;background:#ebebeb;border-color:#94a3b8"></div>
<div class="gf" style="left:542px;top:223px;width:14px;height:17px;background:#ebebeb;border-color:#94a3b8"></div>
<div class="gf" style="left:560px;top:223px;width:14px;height:17px;background:#ebebeb;border-color:#94a3b8"></div>
<div class="gf" style="left:578px;top:223px;width:14px;height:17px;background:#ebebeb;border-color:#94a3b8"></div>
<div class="gf" style="left:605px;top:223px;width:113px;height:17px;background:#ebebeb;border-color:#94a3b8"></div>
<div class="gf" style="left:731px;top:223px;width:51px;height:17px;background:#ebebeb;border-color:#94a3b8"></div>
<div class="gf" style="left:795px;top:223px;width:32px;height:17px;background:#ebebeb;border-color:#94a3b8"></div>
<div class="gf" style="left:840px;top:223px;width:151px;height:17px;background:#ebebeb;border-color:#94a3b8"></div>
<div style="left:217px;top:245px;width:12px;height:12px;border:1px solid #a9b5c6;box-sizing:border-box;background:#d0d0d0"></div>
<div class="gf" style="left:234px;top:242px;width:14px;height:17px;background:#ebebeb;border-color:#94a3b8"></div>
<div class="gf" style="left:253px;top:242px;width:24px;height:17px;background:#ebebeb;border-color:#94a3b8"></div>
<div class="gf" style="left:283px;top:242px;width:14px;height:17px;background:#ebebeb;border-color:#94a3b8"></div>
<div class="gf" style="left:305px;top:242px;width:108px;height:17px;background:#ebebeb;border-color:#94a3b8"></div>
<div class="gf" style="left:424px;top:242px;width:86px;height:17px;background:#ebebeb;border-color:#94a3b8"></div>
<div class="gf" style="left:523px;top:242px;width:15px;height:17px;background:#ebebeb;border-color:#94a3b8"></div>
<div class="gf" style="left:542px;top:242px;width:14px;height:17px;background:#ebebeb;border-color:#94a3b8"></div>
<div class="gf" style="left:560px;top:242px;width:14px;height:17px;background:#ebebeb;border-color:#94a3b8"></div>
<div class="gf" style="left:578px;top:242px;width:14px;height:17px;background:#ebebeb;border-color:#94a3b8"></div>
<div class="gf" style="left:605px;top:242px;width:113px;height:17px;background:#ebebeb;border-color:#94a3b8"></div>
<div class="gf" style="left:731px;top:242px;width:51px;height:17px;background:#ebebeb;border-color:#94a3b8"></div>
<div class="gf" style="left:795px;top:242px;width:32px;height:17px;background:#ebebeb;border-color:#94a3b8"></div>
<div class="gf" style="left:840px;top:242px;width:151px;height:17px;background:#ebebeb;border-color:#94a3b8"></div>
<div style="left:217px;top:264px;width:12px;height:12px;border:1px solid #a9b5c6;box-sizing:border-box;background:#d0d0d0"></div>
<div class="gf" style="left:234px;top:261px;width:14px;height:17px;background:#ebebeb;border-color:#94a3b8"></div>
<div class="gf" style="left:253px;top:261px;width:24px;height:17px;background:#ebebeb;border-color:#94a3b8"></div>
<div class="gf" style="left:283px;top:261px;width:14px;height:17px;background:#ebebeb;border-color:#94a3b8"></div>
<div class="gf" style="left:305px;top:261px;width:108px;height:17px;background:#ebebeb;border-color:#94a3b8"></div>
<div class="gf" style="left:424px;top:261px;width:86px;height:17px;background:#ebebeb;border-color:#94a3b8"></div>
<div class="gf" style="left:523px;top:261px;width:15px;height:17px;background:#ebebeb;border-color:#94a3b8"></div>
<div class="gf" style="left:542px;top:261px;width:14px;height:17px;background:#ebebeb;border-color:#94a3b8"></div>
<div class="gf" style="left:560px;top:261px;width:14px;height:17px;background:#ebebeb;border-color:#94a3b8"></div>
<div class="gf" style="left:578px;top:261px;width:14px;height:17px;background:#ebebeb;border-color:#94a3b8"></div>
<div class="gf" style="left:605px;top:261px;width:113px;height:17px;background:#ebebeb;border-color:#94a3b8"></div>
<div class="gf" style="left:731px;top:261px;width:51px;height:17px;background:#ebebeb;border-color:#94a3b8"></div>
<div class="gf" style="left:795px;top:261px;width:32px;height:17px;background:#ebebeb;border-color:#94a3b8"></div>
<div class="gf" style="left:840px;top:261px;width:151px;height:17px;background:#ebebeb;border-color:#94a3b8"></div>
<div style="left:217px;top:283px;width:12px;height:12px;border:1px solid #a9b5c6;box-sizing:border-box;background:#d0d0d0"></div>
<div class="gf" style="left:234px;top:280px;width:14px;height:17px;background:#ebebeb;border-color:#94a3b8"></div>
<div class="gf" style="left:253px;top:280px;width:24px;height:17px;background:#ebebeb;border-color:#94a3b8"></div>
<div class="gf" style="left:283px;top:280px;width:14px;height:17px;background:#ebebeb;border-color:#94a3b8"></div>
<div class="gf" style="left:305px;top:280px;width:108px;height:17px;background:#ebebeb;border-color:#94a3b8"></div>
<div class="gf" style="left:424px;top:280px;width:86px;height:17px;background:#ebebeb;border-color:#94a3b8"></div>
<div class="gf" style="left:523px;top:280px;width:15px;height:17px;background:#ebebeb;border-color:#94a3b8"></div>
<div class="gf" style="left:542px;top:280px;width:14px;height:17px;background:#ebebeb;border-color:#94a3b8"></div>
<div class="gf" style="left:560px;top:280px;width:14px;height:17px;background:#ebebeb;border-color:#94a3b8"></div>
<div class="gf" style="left:578px;top:280px;width:14px;height:17px;background:#ebebeb;border-color:#94a3b8"></div>
<div class="gf" style="left:605px;top:280px;width:113px;height:17px;background:#ebebeb;border-color:#94a3b8"></div>
<div class="gf" style="left:731px;top:280px;width:51px;height:17px;background:#ebebeb;border-color:#94a3b8"></div>
<div class="gf" style="left:795px;top:280px;width:32px;height:17px;background:#ebebeb;border-color:#94a3b8"></div>
<div class="gf" style="left:840px;top:280px;width:151px;height:17px;background:#ebebeb;border-color:#94a3b8"></div>
<div style="left:217px;top:302px;width:12px;height:12px;border:1px solid #a9b5c6;box-sizing:border-box;background:#d0d0d0"></div>
<div class="gf" style="left:234px;top:299px;width:14px;height:17px;background:#ebebeb;border-color:#94a3b8"></div>
<div class="gf" style="left:253px;top:299px;width:24px;height:17px;background:#ebebeb;border-color:#94a3b8"></div>
<div class="gf" style="left:283px;top:299px;width:14px;height:17px;background:#ebebeb;border-color:#94a3b8"></div>
<div class="gf" style="left:305px;top:299px;width:108px;height:17px;background:#ebebeb;border-color:#94a3b8"></div>
<div class="gf" style="left:424px;top:299px;width:86px;height:17px;background:#ebebeb;border-color:#94a3b8"></div>
<div class="gf" style="left:523px;top:299px;width:15px;height:17px;background:#ebebeb;border-color:#94a3b8"></div>
<div class="gf" style="left:542px;top:299px;width:14px;height:17px;background:#ebebeb;border-color:#94a3b8"></div>
<div class="gf" style="left:560px;top:299px;width:14px;height:17px;background:#ebebeb;border-color:#94a3b8"></div>
<div class="gf" style="left:578px;top:299px;width:14px;height:17px;background:#ebebeb;border-color:#94a3b8"></div>
<div class="gf" style="left:605px;top:299px;width:113px;height:17px;background:#ebebeb;border-color:#94a3b8"></div>
<div class="gf" style="left:731px;top:299px;width:51px;height:17px;background:#ebebeb;border-color:#94a3b8"></div>
<div class="gf" style="left:795px;top:299px;width:32px;height:17px;background:#ebebeb;border-color:#94a3b8"></div>
<div class="gf" style="left:840px;top:299px;width:151px;height:17px;background:#ebebeb;border-color:#94a3b8"></div>
<div style="left:217px;top:321px;width:12px;height:12px;border:1px solid #a9b5c6;box-sizing:border-box;background:#d0d0d0"></div>
<div class="gf" style="left:234px;top:318px;width:14px;height:17px;background:#ebebeb;border-color:#94a3b8"></div>
<div class="gf" style="left:253px;top:318px;width:24px;height:17px;background:#ebebeb;border-color:#94a3b8"></div>
<div class="gf" style="left:283px;top:318px;width:14px;height:17px;background:#ebebeb;border-color:#94a3b8"></div>
<div class="gf" style="left:305px;top:318px;width:108px;height:17px;background:#ebebeb;border-color:#94a3b8"></div>
<div class="gf" style="left:424px;top:318px;width:86px;height:17px;background:#ebebeb;border-color:#94a3b8"></div>
<div class="gf" style="left:523px;top:318px;width:15px;height:17px;background:#ebebeb;border-color:#94a3b8"></div>
<div class="gf" style="left:542px;top:318px;width:14px;height:17px;background:#ebebeb;border-color:#94a3b8"></div>
<div class="gf" style="left:560px;top:318px;width:14px;height:17px;background:#ebebeb;border-color:#94a3b8"></div>
<div class="gf" style="left:578px;top:318px;width:14px;height:17px;background:#ebebeb;border-color:#94a3b8"></div>
<div class="gf" style="left:605px;top:318px;width:113px;height:17px;background:#ebebeb;border-color:#94a3b8"></div>
<div class="gf" style="left:731px;top:318px;width:51px;height:17px;background:#ebebeb;border-color:#94a3b8"></div>
<div class="gf" style="left:795px;top:318px;width:32px;height:17px;background:#ebebeb;border-color:#94a3b8"></div>
<div class="gf" style="left:840px;top:318px;width:151px;height:17px;background:#ebebeb;border-color:#94a3b8"></div>
<div style="left:217px;top:340px;width:12px;height:12px;border:1px solid #a9b5c6;box-sizing:border-box;background:#d0d0d0"></div>
<div class="gf" style="left:234px;top:337px;width:14px;height:17px;background:#ebebeb;border-color:#94a3b8"></div>
<div class="gf" style="left:253px;top:337px;width:24px;height:17px;background:#ebebeb;border-color:#94a3b8"></div>
<div class="gf" style="left:283px;top:337px;width:14px;height:17px;background:#ebebeb;border-color:#94a3b8"></div>
<div class="gf" style="left:305px;top:337px;width:108px;height:17px;background:#ebebeb;border-color:#94a3b8"></div>
<div class="gf" style="left:424px;top:337px;width:86px;height:17px;background:#ebebeb;border-color:#94a3b8"></div>
<div class="gf" style="left:523px;top:337px;width:15px;height:17px;background:#ebebeb;border-color:#94a3b8"></div>
<div class="gf" style="left:542px;top:337px;width:14px;height:17px;background:#ebebeb;border-color:#94a3b8"></div>
<div class="gf" style="left:560px;top:337px;width:14px;height:17px;background:#ebebeb;border-color:#94a3b8"></div>
<div class="gf" style="left:578px;top:337px;width:14px;height:17px;background:#ebebeb;border-color:#94a3b8"></div>
<div class="gf" style="left:605px;top:337px;width:113px;height:17px;background:#ebebeb;border-color:#94a3b8"></div>
<div class="gf" style="left:731px;top:337px;width:51px;height:17px;background:#ebebeb;border-color:#94a3b8"></div>
<div class="gf" style="left:795px;top:337px;width:32px;height:17px;background:#ebebeb;border-color:#94a3b8"></div>
<div class="gf" style="left:840px;top:337px;width:151px;height:17px;background:#ebebeb;border-color:#94a3b8"></div>
<div style="left:217px;top:359px;width:12px;height:12px;border:1px solid #a9b5c6;box-sizing:border-box;background:#d0d0d0"></div>
<div class="gf" style="left:234px;top:356px;width:14px;height:17px;background:#ebebeb;border-color:#94a3b8"></div>
<div class="gf" style="left:253px;top:356px;width:24px;height:17px;background:#ebebeb;border-color:#94a3b8"></div>
<div class="gf" style="left:283px;top:356px;width:14px;height:17px;background:#ebebeb;border-color:#94a3b8"></div>
<div class="gf" style="left:305px;top:356px;width:108px;height:17px;background:#ebebeb;border-color:#94a3b8"></div>
<div class="gf" style="left:424px;top:356px;width:86px;height:17px;background:#ebebeb;border-color:#94a3b8"></div>
<div class="gf" style="left:523px;top:356px;width:15px;height:17px;background:#ebebeb;border-color:#94a3b8"></div>
<div class="gf" style="left:542px;top:356px;width:14px;height:17px;background:#ebebeb;border-color:#94a3b8"></div>
<div class="gf" style="left:560px;top:356px;width:14px;height:17px;background:#ebebeb;border-color:#94a3b8"></div>
<div class="gf" style="left:578px;top:356px;width:14px;height:17px;background:#ebebeb;border-color:#94a3b8"></div>
<div class="gf" style="left:605px;top:356px;width:113px;height:17px;background:#ebebeb;border-color:#94a3b8"></div>
<div class="gf" style="left:731px;top:356px;width:51px;height:17px;background:#ebebeb;border-color:#94a3b8"></div>
<div class="gf" style="left:795px;top:356px;width:32px;height:17px;background:#ebebeb;border-color:#94a3b8"></div>
<div class="gf" style="left:840px;top:356px;width:151px;height:17px;background:#ebebeb;border-color:#94a3b8"></div>
<div style="left:217px;top:378px;width:12px;height:12px;border:1px solid #a9b5c6;box-sizing:border-box;background:#d0d0d0"></div>
<div class="gf" style="left:234px;top:375px;width:14px;height:17px;background:#ebebeb;border-color:#94a3b8"></div>
<div class="gf" style="left:253px;top:375px;width:24px;height:17px;background:#ebebeb;border-color:#94a3b8"></div>
<div class="gf" style="left:283px;top:375px;width:14px;height:17px;background:#ebebeb;border-color:#94a3b8"></div>
<div class="gf" style="left:305px;top:375px;width:108px;height:17px;background:#ebebeb;border-color:#94a3b8"></div>
<div class="gf" style="left:424px;top:375px;width:86px;height:17px;background:#ebebeb;border-color:#94a3b8"></div>
<div class="gf" style="left:523px;top:375px;width:15px;height:17px;background:#ebebeb;border-color:#94a3b8"></div>
<div class="gf" style="left:542px;top:375px;width:14px;height:17px;background:#ebebeb;border-color:#94a3b8"></div>
<div class="gf" style="left:560px;top:375px;width:14px;height:17px;background:#ebebeb;border-color:#94a3b8"></div>
<div class="gf" style="left:578px;top:375px;width:14px;height:17px;background:#ebebeb;border-color:#94a3b8"></div>
<div class="gf" style="left:605px;top:375px;width:113px;height:17px;background:#ebebeb;border-color:#94a3b8"></div>
<div class="gf" style="left:731px;top:375px;width:51px;height:17px;background:#ebebeb;border-color:#94a3b8"></div>
<div class="gf" style="left:795px;top:375px;width:32px;height:17px;background:#ebebeb;border-color:#94a3b8"></div>
<div class="gf" style="left:840px;top:375px;width:151px;height:17px;background:#ebebeb;border-color:#94a3b8"></div>
<div style="left:217px;top:397px;width:12px;height:12px;border:1px solid #a9b5c6;box-sizing:border-box;background:#d0d0d0"></div>
<div class="gf" style="left:234px;top:394px;width:14px;height:18px;background:#ebebeb;border-color:#94a3b8"></div>
<div class="gf" style="left:253px;top:394px;width:24px;height:18px;background:#ebebeb;border-color:#94a3b8"></div>
<div class="gf" style="left:283px;top:394px;width:14px;height:18px;background:#ebebeb;border-color:#94a3b8"></div>
<div class="gf" style="left:305px;top:394px;width:108px;height:18px;background:#ebebeb;border-color:#94a3b8"></div>
<div class="gf" style="left:424px;top:394px;width:86px;height:18px;background:#ebebeb;border-color:#94a3b8"></div>
<div class="gf" style="left:523px;top:394px;width:15px;height:18px;background:#ebebeb;border-color:#94a3b8"></div>
<div class="gf" style="left:542px;top:394px;width:14px;height:18px;background:#ebebeb;border-color:#94a3b8"></div>
<div class="gf" style="left:560px;top:394px;width:14px;height:18px;background:#ebebeb;border-color:#94a3b8"></div>
<div class="gf" style="left:578px;top:394px;width:14px;height:18px;background:#ebebeb;border-color:#94a3b8"></div>
<div class="gf" style="left:605px;top:394px;width:113px;height:18px;background:#ebebeb;border-color:#94a3b8"></div>
<div class="gf" style="left:731px;top:394px;width:51px;height:18px;background:#ebebeb;border-color:#94a3b8"></div>
<div class="gf" style="left:795px;top:394px;width:32px;height:18px;background:#ebebeb;border-color:#94a3b8"></div>
<div class="gf" style="left:840px;top:394px;width:151px;height:18px;background:#ebebeb;border-color:#94a3b8"></div>
<div style="left:217px;top:417px;width:12px;height:12px;border:1px solid #a9b5c6;box-sizing:border-box;background:#d0d0d0"></div>
<div class="gf" style="left:234px;top:414px;width:14px;height:17px;background:#ebebeb;border-color:#94a3b8"></div>
<div class="gf" style="left:253px;top:414px;width:24px;height:17px;background:#ebebeb;border-color:#94a3b8"></div>
<div class="gf" style="left:283px;top:414px;width:14px;height:17px;background:#ebebeb;border-color:#94a3b8"></div>
<div class="gf" style="left:305px;top:414px;width:108px;height:17px;background:#ebebeb;border-color:#94a3b8"></div>
<div class="gf" style="left:424px;top:414px;width:86px;height:17px;background:#ebebeb;border-color:#94a3b8"></div>
<div class="gf" style="left:523px;top:414px;width:15px;height:17px;background:#ebebeb;border-color:#94a3b8"></div>
<div class="gf" style="left:542px;top:414px;width:14px;height:17px;background:#ebebeb;border-color:#94a3b8"></div>
<div class="gf" style="left:560px;top:414px;width:14px;height:17px;background:#ebebeb;border-color:#94a3b8"></div>
<div class="gf" style="left:578px;top:414px;width:14px;height:17px;background:#ebebeb;border-color:#94a3b8"></div>
<div class="gf" style="left:605px;top:414px;width:113px;height:17px;background:#ebebeb;border-color:#94a3b8"></div>
<div class="gf" style="left:731px;top:414px;width:51px;height:17px;background:#ebebeb;border-color:#94a3b8"></div>
<div class="gf" style="left:795px;top:414px;width:32px;height:17px;background:#ebebeb;border-color:#94a3b8"></div>
<div class="gf" style="left:840px;top:414px;width:151px;height:17px;background:#ebebeb;border-color:#94a3b8"></div>
<div style="left:217px;top:436px;width:12px;height:12px;border:1px solid #a9b5c6;box-sizing:border-box;background:#d0d0d0"></div>
<div class="gf" style="left:234px;top:433px;width:14px;height:17px;background:#ebebeb;border-color:#94a3b8"></div>
<div class="gf" style="left:253px;top:433px;width:24px;height:17px;background:#ebebeb;border-color:#94a3b8"></div>
<div class="gf" style="left:283px;top:433px;width:14px;height:17px;background:#ebebeb;border-color:#94a3b8"></div>
<div class="gf" style="left:305px;top:433px;width:108px;height:17px;background:#ebebeb;border-color:#94a3b8"></div>
<div class="gf" style="left:424px;top:433px;width:86px;height:17px;background:#ebebeb;border-color:#94a3b8"></div>
<div class="gf" style="left:523px;top:433px;width:15px;height:17px;background:#ebebeb;border-color:#94a3b8"></div>
<div class="gf" style="left:542px;top:433px;width:14px;height:17px;background:#ebebeb;border-color:#94a3b8"></div>
<div class="gf" style="left:560px;top:433px;width:14px;height:17px;background:#ebebeb;border-color:#94a3b8"></div>
<div class="gf" style="left:578px;top:433px;width:14px;height:17px;background:#ebebeb;border-color:#94a3b8"></div>
<div class="gf" style="left:605px;top:433px;width:113px;height:17px;background:#ebebeb;border-color:#94a3b8"></div>
<div class="gf" style="left:731px;top:433px;width:51px;height:17px;background:#ebebeb;border-color:#94a3b8"></div>
<div class="gf" style="left:795px;top:433px;width:32px;height:17px;background:#ebebeb;border-color:#94a3b8"></div>
<div class="gf" style="left:840px;top:433px;width:151px;height:17px;background:#ebebeb;border-color:#94a3b8"></div>
<div style="left:217px;top:455px;width:12px;height:12px;border:1px solid #a9b5c6;box-sizing:border-box;background:#d0d0d0"></div>
<div class="gf" style="left:234px;top:452px;width:14px;height:17px;background:#ebebeb;border-color:#94a3b8"></div>
<div class="gf" style="left:253px;top:452px;width:24px;height:17px;background:#ebebeb;border-color:#94a3b8"></div>
<div class="gf" style="left:283px;top:452px;width:14px;height:17px;background:#ebebeb;border-color:#94a3b8"></div>
<div class="gf" style="left:305px;top:452px;width:108px;height:17px;background:#ebebeb;border-color:#94a3b8"></div>
<div class="gf" style="left:424px;top:452px;width:86px;height:17px;background:#ebebeb;border-color:#94a3b8"></div>
<div class="gf" style="left:523px;top:452px;width:15px;height:17px;background:#ebebeb;border-color:#94a3b8"></div>
<div class="gf" style="left:542px;top:452px;width:14px;height:17px;background:#ebebeb;border-color:#94a3b8"></div>
<div class="gf" style="left:560px;top:452px;width:14px;height:17px;background:#ebebeb;border-color:#94a3b8"></div>
<div class="gf" style="left:578px;top:452px;width:14px;height:17px;background:#ebebeb;border-color:#94a3b8"></div>
<div class="gf" style="left:605px;top:452px;width:113px;height:17px;background:#ebebeb;border-color:#94a3b8"></div>
<div class="gf" style="left:731px;top:452px;width:51px;height:17px;background:#ebebeb;border-color:#94a3b8"></div>
<div class="gf" style="left:795px;top:452px;width:32px;height:17px;background:#ebebeb;border-color:#94a3b8"></div>
<div class="gf" style="left:840px;top:452px;width:151px;height:17px;background:#ebebeb;border-color:#94a3b8"></div>
<div style="left:217px;top:474px;width:12px;height:12px;border:1px solid #a9b5c6;box-sizing:border-box;background:#d0d0d0"></div>
<div class="gf" style="left:234px;top:471px;width:14px;height:17px;background:#ebebeb;border-color:#94a3b8"></div>
<div class="gf" style="left:253px;top:471px;width:24px;height:17px;background:#ebebeb;border-color:#94a3b8"></div>
<div class="gf" style="left:283px;top:471px;width:14px;height:17px;background:#ebebeb;border-color:#94a3b8"></div>
<div class="gf" style="left:305px;top:471px;width:108px;height:17px;background:#ebebeb;border-color:#94a3b8"></div>
<div class="gf" style="left:424px;top:471px;width:86px;height:17px;background:#ebebeb;border-color:#94a3b8"></div>
<div class="gf" style="left:523px;top:471px;width:15px;height:17px;background:#ebebeb;border-color:#94a3b8"></div>
<div class="gf" style="left:542px;top:471px;width:14px;height:17px;background:#ebebeb;border-color:#94a3b8"></div>
<div class="gf" style="left:560px;top:471px;width:14px;height:17px;background:#ebebeb;border-color:#94a3b8"></div>
<div class="gf" style="left:578px;top:471px;width:14px;height:17px;background:#ebebeb;border-color:#94a3b8"></div>
<div class="gf" style="left:605px;top:471px;width:113px;height:17px;background:#ebebeb;border-color:#94a3b8"></div>
<div class="gf" style="left:731px;top:471px;width:51px;height:17px;background:#ebebeb;border-color:#94a3b8"></div>
<div class="gf" style="left:795px;top:471px;width:32px;height:17px;background:#ebebeb;border-color:#94a3b8"></div>
<div class="gf" style="left:840px;top:471px;width:151px;height:17px;background:#ebebeb;border-color:#94a3b8"></div>
<div style="left:217px;top:493px;width:12px;height:12px;border:1px solid #a9b5c6;box-sizing:border-box;background:#d0d0d0"></div>
<div class="gf" style="left:234px;top:490px;width:14px;height:17px;background:#ebebeb;border-color:#94a3b8"></div>
<div class="gf" style="left:253px;top:490px;width:24px;height:17px;background:#ebebeb;border-color:#94a3b8"></div>
<div class="gf" style="left:283px;top:490px;width:14px;height:17px;background:#ebebeb;border-color:#94a3b8"></div>
<div class="gf" style="left:305px;top:490px;width:108px;height:17px;background:#ebebeb;border-color:#94a3b8"></div>
<div class="gf" style="left:424px;top:490px;width:86px;height:17px;background:#ebebeb;border-color:#94a3b8"></div>
<div class="gf" style="left:523px;top:490px;width:15px;height:17px;background:#ebebeb;border-color:#94a3b8"></div>
<div class="gf" style="left:542px;top:490px;width:14px;height:17px;background:#ebebeb;border-color:#94a3b8"></div>
<div class="gf" style="left:560px;top:490px;width:14px;height:17px;background:#ebebeb;border-color:#94a3b8"></div>
<div class="gf" style="left:578px;top:490px;width:14px;height:17px;background:#ebebeb;border-color:#94a3b8"></div>
<div class="gf" style="left:605px;top:490px;width:113px;height:17px;background:#ebebeb;border-color:#94a3b8"></div>
<div class="gf" style="left:731px;top:490px;width:51px;height:17px;background:#ebebeb;border-color:#94a3b8"></div>
<div class="gf" style="left:795px;top:490px;width:32px;height:17px;background:#ebebeb;border-color:#94a3b8"></div>
<div class="gf" style="left:840px;top:490px;width:151px;height:17px;background:#ebebeb;border-color:#94a3b8"></div>
<div style="left:212px;top:47px;width:21px;height:65px;border:4px solid #fd0000;border-radius:3px;box-sizing:border-box"></div>
<div style="left:543px;top:540px;width:450px;height:15px;background:#94a3b8"></div>
<div style="left:543px;top:541px;width:70px;height:13px;background:#cccccc"></div>
<div style="left:979px;top:541px;width:14px;height:13px;background:#d0d0d0;border-radius:1px 7px 7px 1px"></div>
<svg style="position:absolute;left:981px;top:542px" width="11" height="11"><path d="M3.5 2 L8 5.5 L3.5 9Z" fill="#60728f"/></svg>
<div style="left:47px;top:556px;width:953px;height:5px;background:#d9d9d9"></div>
<div style="left:278px;top:91px;width:669px;height:202px;background:#d9d9d9;border-right:2px solid #454545;border-bottom:2px solid #454545;box-sizing:border-box;border-radius:0 4px 4px 0"></div>
<div style="left:278px;top:91px;width:667px;height:21px;background:#26354c;border-radius:3px 4px 0 0"></div>
<div style="left:278px;top:112px;width:667px;height:2px;background:#f4f4f4"></div>
<div style="left:278px;top:114px;width:2px;height:177px;background:#f0f0f0"></div>
<div style="left:942px;top:114px;width:2px;height:177px;background:#b0bccb"></div>
<svg style="position:absolute;left:279.7px;top:92.1px" width="19.4" height="18.8" viewBox="0 0 16 16.6" preserveAspectRatio="none"><rect x="0.65" y="0.65" width="14.7" height="15.3" fill="#fbfbf6" stroke="#1a1af0" stroke-width="1.3"/><circle cx="6.8" cy="2.4" r="1.05" fill="#0c0c50"/><path d="M1.8 3.7 L6.0 3.1 L4.5 9.6 L2.5 9.8 L3.8 5.3 L1.6 5.5Z" fill="#1212ee"/><path d="M7.6 3.3 L13.3 3.1 L12.7 4.9 L9.0 5.0 L8.5 6.7 L12.0 6.6 L11.5 8.4 L8.0 8.5 L6.6 12.9 L4.6 13.0Z" fill="#1212ee"/></svg>
<div class="t" style="left:300px;top:95.59px;font-size:12.3px;line-height:12.3px;color:#eef1f5;letter-spacing:-0.017px;">Hromadná změna zakázek</div>
<svg style="position:absolute;left:455px;top:97px" width="470" height="12"><defs><pattern id="gp1" x="0" y="0" width="8" height="8" patternUnits="userSpaceOnUse"><rect x="2" y="1" width="1" height="2" fill="#0b121c"/><rect x="1" y="2" width="2" height="1" fill="#0b121c"/><rect x="0" y="0" width="2" height="2" fill="#8792a4"/><rect x="6" y="5" width="1" height="2" fill="#0b121c"/><rect x="5" y="6" width="2" height="1" fill="#0b121c"/><rect x="4" y="4" width="2" height="2" fill="#8792a4"/></pattern></defs><rect width="470" height="12" fill="url(#gp1)"/></svg>
<svg style="position:absolute;left:931px;top:97px" width="10" height="10"><path d="M1 1 L9 9 M9 1 L1 9" stroke="#ffffff" stroke-width="1.7"/></svg>
<div style="left:289px;top:123px;width:649px;height:168px;border:2px solid #a9b6c8;border-bottom:none;border-radius:5px 5px 0 0;box-sizing:border-box"></div>
<div style="left:532px;top:118px;width:129px;height:14px;background:#d9d9d9"></div>
<div class="t" style="left:540.5px;top:117.57px;font-size:13.5px;line-height:13.5px;font-weight:bold;color:#f2161f;letter-spacing:-0.004px;">Hromadné změny</div>
<div class="t" style="left:299px;top:139.39px;font-size:11px;line-height:11px;font-weight:bold;color:#1e1e1e;letter-spacing:0.094px;">Položka</div>
<div class="t" style="left:419.5px;top:139.39px;font-size:11px;line-height:11px;font-weight:bold;color:#1e1e1e;">Operace</div>
<div class="t" style="left:299px;top:181.69px;font-size:11px;line-height:11px;font-weight:bold;color:#1e1e1e;">Zd.</div>
<div class="t" style="left:299px;top:196.69px;font-size:11px;line-height:11px;font-weight:bold;color:#1e1e1e;">pln.</div>
<div class="t" style="left:327px;top:196.69px;font-size:11px;line-height:11px;font-weight:bold;color:#1e1e1e;">Sazba v %</div>
<div class="t" style="left:398px;top:196.69px;font-size:11px;line-height:11px;font-weight:bold;color:#1e1e1e;">Popis sazby DPH</div>
<div class="t" style="left:556px;top:181.69px;font-size:11px;line-height:11px;font-weight:bold;color:#1e1e1e;letter-spacing:0.181px;">Platnost sazby</div>
<div class="t" style="left:561.5px;top:196.69px;font-size:11px;line-height:11px;font-weight:bold;color:#1e1e1e;">Od</div>
<div class="t" style="left:610px;top:196.69px;font-size:11px;line-height:11px;font-weight:bold;color:#1e1e1e;">Do</div>
<div class="t" style="left:664.5px;top:196.69px;font-size:11px;line-height:11px;font-weight:bold;color:#1e1e1e;">NS</div>
<div class="t" style="left:721.5px;top:196.69px;font-size:11px;line-height:11px;font-weight:bold;color:#1e1e1e;">TA</div>
<div class="t" style="left:758.5px;top:196.69px;font-size:11px;line-height:11px;font-weight:bold;color:#1e1e1e;">Akce</div>
<div class="t" style="left:862.5px;top:196.69px;font-size:11px;line-height:11px;font-weight:bold;color:#1e1e1e;">KP</div>
<div style="left:299px;top:156.5px;width:119px;height:18px;background:#fff;border-style:solid;border-width:2px 1px 1px 2px;border-color:#6f84a4 #8d9db5 #8d9db5 #6f84a4;border-radius:3px;box-sizing:border-box"></div>
<div style="left:402px;top:158.5px;width:15px;height:15px;background:#d6d6d6"></div>
<svg style="position:absolute;left:405px;top:163.5px" width="10" height="6"><path d="M0.5 0.5 H9.5 L5 5Z" fill="#6f84a4"/></svg>
<div class="t" style="left:303px;top:161.69px;font-size:11px;line-height:11px;color:#1a1a1a;letter-spacing:-0.417px;">Sazba DPH</div>
<div style="left:420px;top:156.5px;width:86px;height:18px;background:#fff;border-style:solid;border-width:2px 1px 1px 2px;border-color:#6f84a4 #8d9db5 #8d9db5 #6f84a4;border-radius:3px;box-sizing:border-box"></div>
<div style="left:490px;top:158.5px;width:15px;height:15px;background:#d6d6d6"></div>
<svg style="position:absolute;left:493px;top:163.5px" width="10" height="6"><path d="M0.5 0.5 H9.5 L5 5Z" fill="#6f84a4"/></svg>
<div class="t" style="left:424px;top:161.69px;font-size:11px;line-height:11px;color:#1a1a1a;letter-spacing:-0.383px;">Doplnění</div>
<div class="if" style="left:299px;top:214px;width:22px;height:15px;background:#e6e6e6;"></div>
<div class="t" style="left:302px;top:219.69px;font-size:11px;line-height:11px;color:#1a1a1a;width:20px;overflow:hidden;">P</div>
<div class="if" style="left:326px;top:214px;width:67px;height:15px;background:#fff;"></div>
<div class="t" style="left:329px;top:219.69px;font-size:11px;line-height:11px;color:#1a1a1a;width:65px;overflow:hidden;">0</div>
<div class="if" style="left:399px;top:214px;width:152px;height:15px;background:#e6e6e6;"></div>
<div class="t" style="left:402px;top:219.69px;font-size:11px;line-height:11px;color:#1a1a1a;width:150px;overflow:hidden;letter-spacing:-0.414px;">0% - PDP</div>
<div class="if" style="left:556px;top:214px;width:50px;height:15px;background:#e6e6e6;"></div>
<div class="if" style="left:610px;top:214px;width:50px;height:15px;background:#e6e6e6;"></div>
<div class="if" style="left:665px;top:214px;width:52px;height:15px;background:#fff;"></div>
<div class="if" style="left:722px;top:214px;width:32px;height:15px;background:#fff;"></div>
<div class="if" style="left:759px;top:214px;width:99px;height:15px;background:#fff;"></div>
<div class="if" style="left:862px;top:214px;width:69px;height:15px;background:#fff;"></div>
<div style="left:40px;top:230px;width:503px;height:331px;background:#d9d9d9"></div>
<div style="left:40px;top:230px;width:503px;height:17px;background:#94a3b8"></div>
<svg style="position:absolute;left:40px;top:230px" width="16" height="16.6" viewBox="0 0 16 16.6" preserveAspectRatio="none"><rect x="0" y="0" width="16" height="16.6" fill="#f6f6f2"/><path d="M15.35 0 V15.95 H0" stroke="#2a2af0" stroke-width="1.3" fill="none"/><circle cx="6.8" cy="2.4" r="1.05" fill="#0c0c50"/><path d="M1.8 3.7 L6.0 3.1 L4.5 9.6 L2.5 9.8 L3.8 5.3 L1.6 5.5Z" fill="#1212ee"/><path d="M7.6 3.3 L13.3 3.1 L12.7 4.9 L9.0 5.0 L8.5 6.7 L12.0 6.6 L11.5 8.4 L8.0 8.5 L6.6 12.9 L4.6 13.0Z" fill="#1212ee"/></svg>
<div class="t" style="left:58px;top:233.52px;font-size:11.2px;line-height:11.2px;color:#d3d9e2;letter-spacing:-0.001px;">Hromadná změna zakázek</div>
<div class="t" style="left:44px;top:249.19px;font-size:11px;line-height:11px;color:#3a3a3a;letter-spacing:-0.000px;">Průběh zpracování</div>
<div style="left:44px;top:267px;width:496px;height:300px;background:#cdcdcd;border:1px solid #8fa0b8;border-width:2px 1px 1px 2px;border-radius:4px 4px 0 0;box-sizing:border-box"></div>
<div style="left:526px;top:269px;width:13px;height:292px;background:#d3d3d3;border-left:1px solid #a9b6c8;box-sizing:border-box"></div>
<div style="left:527px;top:270px;width:12px;height:13px;background:#dcdcdc;border:1px solid #f2f2f2;border-radius:6px 6px 0 0;box-sizing:border-box"></div>
<div style="left:527px;top:282px;width:12px;height:1px;background:#a9b6c8"></div>
<svg style="position:absolute;left:528px;top:272px" width="9" height="8"><path d="M1 6 L4.5 2.5 L8 6Z" fill="#5a6e8e"/></svg>
<div style="left:535px;top:381.0px;width:2px;height:2px;background:#f6f6f6;border-radius:1px;box-shadow:0.8px 0.8px 0 #8d99aa"></div>
<div style="left:530px;top:385.0px;width:2px;height:2px;background:#f6f6f6;border-radius:1px;box-shadow:0.8px 0.8px 0 #8d99aa"></div>
<div style="left:535px;top:388.5px;width:2px;height:2px;background:#f6f6f6;border-radius:1px;box-shadow:0.8px 0.8px 0 #8d99aa"></div>
<div style="left:530px;top:392.5px;width:2px;height:2px;background:#f6f6f6;border-radius:1px;box-shadow:0.8px 0.8px 0 #8d99aa"></div>
<div style="left:535px;top:396.0px;width:2px;height:2px;background:#f6f6f6;border-radius:1px;box-shadow:0.8px 0.8px 0 #8d99aa"></div>
<div style="left:530px;top:400.0px;width:2px;height:2px;background:#f6f6f6;border-radius:1px;box-shadow:0.8px 0.8px 0 #8d99aa"></div>
<div style="left:535px;top:403.5px;width:2px;height:2px;background:#f6f6f6;border-radius:1px;box-shadow:0.8px 0.8px 0 #8d99aa"></div>
<div style="left:530px;top:407.5px;width:2px;height:2px;background:#f6f6f6;border-radius:1px;box-shadow:0.8px 0.8px 0 #8d99aa"></div>
<div style="left:535px;top:411.0px;width:2px;height:2px;background:#f6f6f6;border-radius:1px;box-shadow:0.8px 0.8px 0 #8d99aa"></div>
<div style="left:530px;top:415.0px;width:2px;height:2px;background:#f6f6f6;border-radius:1px;box-shadow:0.8px 0.8px 0 #8d99aa"></div>
<div style="left:535px;top:418.5px;width:2px;height:2px;background:#f6f6f6;border-radius:1px;box-shadow:0.8px 0.8px 0 #8d99aa"></div>
<div class="t" style="left:47px;top:272.14px;font-size:10px;line-height:10px;color:#1e1e1e;white-space:pre;letter-spacing:-0.05px">----------------- PA012_HROMZMENY -----------------</div>
<div class="t" style="left:47px;top:285.92px;font-size:10px;line-height:10px;color:#1e1e1e;letter-spacing:-0.083px;white-space:pre;">START 30.08.16 10:27:29</div>
<div class="t" style="left:47px;top:299.70px;font-size:10px;line-height:10px;color:#1e1e1e;white-space:pre;letter-spacing:-0.05px">Probíhá inicializace.</div>
<div class="t" style="left:47px;top:313.48px;font-size:10px;line-height:10px;color:#1e1e1e;letter-spacing:-0.125px;white-space:pre;">Požadovaná změna: Doplnění položky sazba DPH.</div>
<div class="t" style="left:47px;top:327.26px;font-size:10px;line-height:10px;color:#1e1e1e;white-space:pre;letter-spacing:-0.05px">&nbsp;&nbsp;&nbsp;nová hodnota:</div>
<div class="t" style="left:140.5px;top:327.26px;font-size:10px;line-height:10px;color:#1e1e1e;white-space:pre;letter-spacing:-0.05px">0.</div>
<div class="t" style="left:47px;top:341.04px;font-size:10px;line-height:10px;color:#1e1e1e;letter-spacing:-0.053px;white-space:pre;">Počet záznamů ke zpracování: 3.</div>
<div class="t" style="left:47px;top:354.82px;font-size:10px;line-height:10px;color:#1e1e1e;letter-spacing:0.014px;white-space:pre;">Chcete opravdu zpracovat data?: ANO</div>
<div class="t" style="left:47px;top:368.60px;font-size:10px;line-height:10px;color:#1e1e1e;white-space:pre;letter-spacing:-0.05px">Zpracovávám data ...</div>
<div class="t" style="left:47px;top:382.38px;font-size:10px;line-height:10px;color:#1e1e1e;white-space:pre;letter-spacing:-0.05px">&nbsp;&nbsp;&nbsp;OK změna u zakázky Typ: 40, nazev: zakázka 21245</div>
<div class="t" style="left:47px;top:396.16px;font-size:10px;line-height:10px;color:#1e1e1e;white-space:pre;letter-spacing:-0.05px">&nbsp;&nbsp;&nbsp;OK změna u zakázky Typ: 46, nazev: zakázka 21248</div>
<div class="t" style="left:47px;top:409.94px;font-size:10px;line-height:10px;color:#1e1e1e;white-space:pre;letter-spacing:-0.05px">&nbsp;&nbsp;&nbsp;OK změna u zakázky Typ: 21, nazev: zakázka 21249</div>
<div class="t" style="left:47px;top:423.72px;font-size:10px;line-height:10px;color:#1e1e1e;white-space:pre;letter-spacing:-0.05px">&nbsp;============= Konec zpracování =============</div>
<div class="t" style="left:47px;top:451.28px;font-size:10px;line-height:10px;color:#1e1e1e;letter-spacing:-0.043px;white-space:pre;">Počet změněných záznamů = 3,</div>
<div class="t" style="left:47px;top:465.06px;font-size:10px;line-height:10px;color:#1e1e1e;white-space:pre;letter-spacing:0.08px">Počet nezměněných záznamů (chyby) = 0.</div>
<div class="t" style="left:47px;top:478.84px;font-size:10px;line-height:10px;color:#1e1e1e;letter-spacing:-0.037px;white-space:pre;">Chcete potvrdit změny?:</div>
<div style="left:550px;top:250px;width:97px;height:16px;background:#dcdcdc;border:1px solid #b9c3d0;box-sizing:border-box"></div>
<div class="t" style="left:565px;top:252.69px;font-size:11px;line-height:11px;color:#2a2a2a;letter-spacing:-0.082px;">Proveď změny</div>
<div style="left:547px;top:247px;width:104px;height:22px;border:4px solid #fd0000;border-radius:3px;box-sizing:border-box"></div>
<div style="left:235px;top:421px;width:308px;height:140px;background:#5d7394"></div>
<div style="left:235px;top:421px;width:308px;height:18px;background:#26354c;border-radius:2px 2px 0 0"></div>
<div class="t" style="left:237px;top:424.52px;font-size:11.2px;line-height:11.2px;color:#ffffff;letter-spacing:-0.001px;">Hromadná změna zakázek</div>
<svg style="position:absolute;left:378px;top:425px" width="150" height="12"><defs><pattern id="gp2" x="0" y="0" width="8" height="8" patternUnits="userSpaceOnUse"><rect x="2" y="1" width="1" height="2" fill="#0b121c"/><rect x="1" y="2" width="2" height="1" fill="#0b121c"/><rect x="0" y="0" width="2" height="2" fill="#8792a4"/><rect x="6" y="5" width="1" height="2" fill="#0b121c"/><rect x="5" y="6" width="2" height="1" fill="#0b121c"/><rect x="4" y="4" width="2" height="2" fill="#8792a4"/></pattern></defs><rect width="150" height="12" fill="url(#gp2)"/></svg>
<svg style="position:absolute;left:532px;top:425px" width="10" height="10"><path d="M1 1 L9 9 M9 1 L1 9" stroke="#ffffff" stroke-width="1.6"/></svg>
<svg style="position:absolute;left:265px;top:465px" width="34" height="34" viewBox="0 0 34 34"><g transform="rotate(-17 17 17)"><rect x="6" y="7" width="22" height="22" fill="#1e1e1e" transform="translate(1.3 1.3)"/><rect x="6" y="7" width="22" height="22" fill="#fbfbc8"/><circle cx="13.5" cy="6.8" r="1.9" fill="#4a4a4a"/><circle cx="13.1" cy="6.3" r="0.8" fill="#b0b0b0"/></g></svg>
<div class="t" style="left:329px;top:471.19px;font-size:11px;line-height:11px;color:#eef1f5;letter-spacing:-0.03px">Počet změněných záznamů = 3,</div>
<div class="t" style="left:329px;top:485.99px;font-size:11px;line-height:11px;color:#eef1f5;letter-spacing:-0.035px;">Počet nezměněných záznamů (chyby) = 0.</div>
<div class="t" style="left:329px;top:500.79px;font-size:11px;line-height:11px;color:#eef1f5;letter-spacing:-0.03px">Chcete potvrdit změny?:</div>
<div style="left:440px;top:543px;width:43px;height:20px;background:#d3d3d3;border-radius:6px 6px 0 0;border-top:1px dotted #333;box-sizing:border-box"></div>
<div class="t" style="left:454px;top:550.27px;font-size:11.5px;line-height:11.5px;color:#1a1a1a;">Ano</div>
<div style="left:488px;top:543px;width:47px;height:20px;background:#d3d3d3;border-radius:8px 8px 0 0"></div>
<div class="t" style="left:502px;top:550.27px;font-size:11.5px;line-height:11.5px;color:#1a1a1a;">Ne</div>
<div style="left:437px;top:540px;width:50px;height:22px;border:4px solid #fd0000;border-radius:3px;box-sizing:border-box"></div>
<div style="left:446px;top:544.5px;width:36px;height:1px;border-top:1px dotted #222;box-sizing:border-box"></div>
<div style="left:0px;top:561px;width:1000px;height:20px;background:#26354c"></div>
<div style="left:0px;top:581px;width:1000px;height:2px;background:#e8e8e8"></div>
<svg style="position:absolute;left:-1px;top:561px" width="16" height="18" viewBox="0 0 16 16.6" preserveAspectRatio="none"><rect x="0.65" y="0.65" width="14.7" height="15.3" fill="#fbfbf6" stroke="#1a1af0" stroke-width="1.3"/><circle cx="6.8" cy="2.4" r="1.05" fill="#0c0c50"/><path d="M1.8 3.7 L6.0 3.1 L4.5 9.6 L2.5 9.8 L3.8 5.3 L1.6 5.5Z" fill="#1212ee"/><path d="M7.6 3.3 L13.3 3.1 L12.7 4.9 L9.0 5.0 L8.5 6.7 L12.0 6.6 L11.5 8.4 L8.0 8.5 L6.6 12.9 L4.6 13.0Z" fill="#1212ee"/></svg>
<div class="t" style="left:17.5px;top:565.34px;font-size:12px;line-height:12px;color:#ffffff;letter-spacing:-0.062px;">01220 - Zakázky - projekty (EKPROZAK) - [30.08.2016; 10:28]&nbsp; [ ]&nbsp; [ ]</div>
<svg style="position:absolute;left:974px;top:565px" width="11" height="11"><path d="M3.5 3 V0.5 H10.5 V7.5 H8" stroke="#e8e8e8" stroke-width="1" fill="none"/><path d="M3.5 1.5 H10.5" stroke="#e8e8e8" stroke-width="1.2"/><rect x="0.5" y="3.5" width="7" height="7" stroke="#e8e8e8" fill="none"/><path d="M0.5 4.6 H7.5" stroke="#e8e8e8" stroke-width="1.2"/></svg>
<svg style="position:absolute;left:990px;top:565px" width="10" height="10"><path d="M1 1 L9 9 M9 1 L1 9" stroke="#f0f0f0" stroke-width="1.7"/></svg>
<div style="left:0px;top:583px;width:45px;height:279px;background:#cfcfcf"></div>
<div style="left:46px;top:583px;width:1px;height:279px;background:#8d9db5"></div>
<div style="left:0px;top:587px;width:33px;height:19px;background:#d8d8d8"></div>
<svg style="position:absolute;left:0px;top:591px" width="13" height="13"><circle cx="6" cy="6.5" r="3.4" fill="#94a3b8"/><path d="M2 9.5 A5 5 0 0 1 9.5 2.5" stroke="#2a2a2a" stroke-width="1.3" fill="none"/><path d="M9.5 2.5 A5 5 0 0 1 2 9.5" stroke="#f4f4f4" stroke-width="1.3" fill="none"/></svg>
<div class="t" style="left:14.5px;top:591.77px;font-size:11.5px;line-height:11.5px;color:#6b82a8;letter-spacing:-0.651px;">Nav</div>
<div class="t" style="left:65.5px;top:605.19px;font-size:11px;line-height:11px;font-weight:bold;color:#1e1e1e;letter-spacing:-0.039px;">Druh</div>
<div class="t" style="left:101.5px;top:605.19px;font-size:11px;line-height:11px;font-weight:bold;color:#1e1e1e;letter-spacing:-0.381px;">Úč</div>
<div class="t" style="left:128.5px;top:605.19px;font-size:11px;line-height:11px;font-weight:bold;color:#1e1e1e;letter-spacing:0.037px;">Název</div>
<div class="t" style="left:272.5px;top:605.19px;font-size:11px;line-height:11px;font-weight:bold;color:#1e1e1e;letter-spacing:0.233px;">Typ zakázky</div>
<div class="t" style="left:442.5px;top:605.19px;font-size:11px;line-height:11px;font-weight:bold;color:#1e1e1e;letter-spacing:0.009px;">Od</div>
<div class="t" style="left:489.5px;top:605.19px;font-size:11px;line-height:11px;font-weight:bold;color:#1e1e1e;letter-spacing:-0.528px;">Do</div>
<div class="t" style="left:531.5px;top:605.19px;font-size:11px;line-height:11px;font-weight:bold;color:#1e1e1e;letter-spacing:0.126px;">Popis</div>
<div class="t" style="left:869.5px;top:605.19px;font-size:11px;line-height:11px;font-weight:bold;color:#1e1e1e;letter-spacing:0.327px;">Projekt</div>
<div class="t" style="left:65.5px;top:648.19px;font-size:11px;line-height:11px;font-weight:bold;color:#1e1e1e;letter-spacing:-0.264px;">Hlavní NS</div>
<div class="t" style="left:302.5px;top:649.69px;font-size:11px;line-height:11px;font-weight:bold;color:#1e1e1e;letter-spacing:0.058px;">Všechna NS</div>
<div class="t" style="left:400px;top:648.19px;font-size:11px;line-height:11px;font-weight:bold;color:#1e1e1e;letter-spacing:-0.231px;">Hlavní KP</div>
<div class="t" style="left:555.5px;top:649.69px;font-size:11px;line-height:11px;font-weight:bold;color:#1e1e1e;letter-spacing:0.087px;">Všechny KP</div>
<div class="t" style="left:651.5px;top:648.19px;font-size:11px;line-height:11px;font-weight:bold;color:#1e1e1e;letter-spacing:-0.008px;">Hlavní osoba</div>
<div class="t" style="left:66.3px;top:687.69px;font-size:11px;line-height:11px;font-weight:bold;color:#1e1e1e;letter-spacing:-0.463px;">Stav</div>
<div class="t" style="left:198.9px;top:687.69px;font-size:11px;line-height:11px;font-weight:bold;color:#1e1e1e;letter-spacing:0.161px;">Plnění</div>
<div class="t" style="left:246.5px;top:687.69px;font-size:11px;line-height:11px;font-weight:bold;color:#1e1e1e;letter-spacing:-0.009px;">Kalk.jed.</div>
<div class="t" style="left:336.8px;top:687.69px;font-size:11px;line-height:11px;font-weight:bold;color:#1e1e1e;letter-spacing:0.024px;">Klasifikace</div>
<div class="t" style="left:653.7px;top:687.19px;font-size:11px;line-height:11px;font-weight:bold;color:#1e1e1e;letter-spacing:0.265px;">Volitelná položka</div>
<div class="t" style="left:65.6px;top:728.19px;font-size:11px;line-height:11px;font-weight:bold;color:#1e1e1e;letter-spacing:0.295px;">Poznámka</div>
<div class="t" style="left:652px;top:728.19px;font-size:11px;line-height:11px;font-weight:bold;color:#1e1e1e;letter-spacing:0.343px;">Referenční rozpočet</div>
<div class="t" style="left:857.8px;top:728.19px;font-size:11px;line-height:11px;font-weight:bold;color:#1e1e1e;letter-spacing:-0.441px;">OZ</div>
<div class="t" style="left:879.4px;top:728.19px;font-size:11px;line-height:11px;font-weight:bold;color:#1e1e1e;letter-spacing:-0.528px;">RZ</div>
<div style="left:48px;top:622px;width:15px;height:19px;background:#e6e6e6;border:1px solid #b0bccc;border-radius:2px;box-sizing:border-box"></div>
<div class="if" style="left:65px;top:622px;width:23px;height:16px;background:#ffc6c6;"></div>
<div class="t" style="left:68px;top:627.19px;font-size:11px;line-height:11px;color:#1a1a1a;width:21px;overflow:hidden;letter-spacing:-0.333px;">PZD</div>
<div class="if" style="left:101px;top:622px;width:13px;height:16px;background:#ffc6c6;"></div>
<div class="t" style="left:104px;top:627.19px;font-size:11px;line-height:11px;color:#1a1a1a;width:11px;overflow:hidden;">A</div>
<div class="if" style="left:128.5px;top:622px;width:128px;height:16px;background:#ffc6c6;"></div>
<div class="t" style="left:131.9px;top:627.19px;font-size:11px;line-height:11px;color:#1a1a1a;width:125.6px;overflow:hidden;letter-spacing:-0.074px;">zakázka 21245</div>
<div class="if" style="left:272.5px;top:622px;width:138px;height:16px;background:#ffc6c6;"></div>
<div class="t" style="left:274.7px;top:627.19px;font-size:11px;line-height:11px;color:#1a1a1a;width:136.8px;overflow:hidden;letter-spacing:0.035px;">40 Výnosy-vlastní činn.</div>
<div class="if" style="left:441px;top:622px;width:13px;height:16px;background:#fff;"></div>
<div class="t" style="left:444px;top:627.19px;font-size:11px;line-height:11px;color:#1a1a1a;width:11px;overflow:hidden;letter-spacing:-0.675px;">01</div>
<div class="if" style="left:459px;top:622px;width:13px;height:16px;background:#fff;"></div>
<div class="t" style="left:461.9px;top:627.19px;font-size:11px;line-height:11px;color:#1a1a1a;width:11.1px;overflow:hidden;letter-spacing:0.025px;">12</div>
<div class="if" style="left:486px;top:622px;width:13px;height:16px;background:#fff;"></div>
<div class="if" style="left:504px;top:622px;width:13px;height:16px;background:#fff;"></div>
<div class="if" style="left:531px;top:622px;width:328px;height:16px;background:#fff;"></div>
<div class="t" style="left:534px;top:627.19px;font-size:11px;line-height:11px;color:#1a1a1a;width:326px;overflow:hidden;letter-spacing:-0.147px;">komentář 21245</div>
<div class="if" style="left:869.5px;top:622px;width:119px;height:16px;background:#fff;"></div>
<div style="left:371px;top:647px;width:12px;height:13px;background:#cfcfcf;border-style:solid;border-width:2px 1.5px 1.5px 2px;border-color:#56677f #f2f2f2 #f2f2f2 #56677f;border-radius:1.5px;box-sizing:border-box"></div>
<div style="left:624px;top:647px;width:12px;height:13px;background:#cfcfcf;border-style:solid;border-width:2px 1.5px 1.5px 2px;border-color:#56677f #f2f2f2 #f2f2f2 #56677f;border-radius:1.5px;box-sizing:border-box"></div>
<div class="if" style="left:65.5px;top:665px;width:69px;height:16px;background:#e2e2e2;"></div>
<div class="t" style="left:68.0px;top:670.19px;font-size:11px;line-height:11px;color:#1a1a1a;width:67.5px;overflow:hidden;letter-spacing:-0.005px;">90999</div>
<div class="if" style="left:147px;top:665px;width:239px;height:16px;background:#e2e2e2;"></div>
<div class="t" style="left:149.6px;top:670.19px;font-size:11px;line-height:11px;color:#1a1a1a;width:237.4px;overflow:hidden;letter-spacing:-0.067px;">středisko 161</div>
<div class="if" style="left:400px;top:665px;width:239px;height:16px;background:#e2e2e2;"></div>
<div class="t" style="left:403.1px;top:670.19px;font-size:11px;line-height:11px;color:#1a1a1a;width:236.9px;overflow:hidden;letter-spacing:-0.090px;">1-01 Hlavní činnost</div>
<div class="if" style="left:651.5px;top:665px;width:235px;height:16px;background:#e2e2e2;"></div>
<div class="t" style="left:655.0px;top:670.19px;font-size:11px;line-height:11px;color:#1a1a1a;width:232.5px;overflow:hidden;letter-spacing:-0.314px;">prijmeni874 jmeno874</div>
<div style="left:906px;top:664px;width:100px;height:19px;background:#e2e2e2;border:1px solid #c8ced8;border-left-color:#f4f4f4;border-top-color:#f4f4f4;box-sizing:border-box"></div>
<div style="left:906px;top:682px;width:100px;height:1px;background:#8d9db4"></div>
<div class="t" style="left:911px;top:668.19px;font-size:11px;line-height:11px;font-weight:bold;color:#2a2a2a;letter-spacing:-0.267px;-webkit-text-stroke:0">Odpovědné osoby</div>
<div class="if" style="left:66px;top:705px;width:49px;height:16px;background:#fff;"></div>
<div class="if" style="left:128px;top:705px;width:101px;height:16px;background:#fff;"></div>
<div class="if" style="left:246px;top:705px;width:75px;height:16px;background:#fff;"></div>
<div class="if" style="left:336px;top:705px;width:48px;height:16px;background:#fff;"></div>
<div class="if" style="left:391px;top:705px;width:74px;height:16px;background:#fff;"></div>
<div class="if" style="left:472.5px;top:705px;width:166px;height:16px;background:#fff;"></div>
<div class="if" style="left:651.5px;top:705px;width:357px;height:16px;background:#fff;"></div>
<div class="if" style="left:65.5px;top:745px;width:573px;height:15px;background:#fff;"></div>
<div class="if" style="left:652px;top:745px;width:194px;height:15px;background:#fff;"></div>
<div class="if" style="left:857.5px;top:745px;width:12px;height:15px;background:#fff;"></div>
<div class="t" style="left:859.5px;top:749.27px;font-size:11.5px;line-height:11.5px;color:#1a1a1a;width:11px;overflow:hidden;">A</div>
<div class="if" style="left:879.5px;top:745px;width:12px;height:15px;background:#fff;"></div>
<div style="left:902px;top:745.5px;width:110px;height:19px;background:#dcdcdc;border:1px solid #f2f2f2;border-right-color:#b8c0cc;border-bottom-color:#b8c0cc;box-sizing:border-box"></div>
<div class="t" style="left:906.4px;top:750.27px;font-size:11.5px;line-height:11.5px;color:#8b9bb4;">Sestavení rozpočtu</div>
<div style="left:47px;top:796px;width:960px;height:66px;background:#d8d8d8;border-top:1px solid #f2f2f2;border-left:1px solid #f2f2f2;border-radius:4px 0 0 0"></div>
<div style="left:47.5px;top:775px;width:74px;height:21px;background:#94a3b8;border-radius:5px 5px 0 0"></div>
<div class="t" style="left:50.0px;top:781.34px;width:74px;text-align:center;font-size:12px;line-height:12px;color:#1a1a1a">Vazby</div>
<div style="left:128px;top:775px;width:74px;height:21px;background:#94a3b8;border-radius:5px 5px 0 0"></div>
<div class="t" style="left:128px;top:781.34px;width:74px;text-align:center;font-size:12px;line-height:12px;color:#1a1a1a">NS</div>
<div style="left:205px;top:775px;width:74px;height:21px;background:#94a3b8;border-radius:5px 5px 0 0"></div>
<div class="t" style="left:205px;top:781.34px;width:74px;text-align:center;font-size:12px;line-height:12px;color:#1a1a1a">KP</div>
<div style="left:282px;top:775px;width:74px;height:21px;background:#94a3b8;border-radius:5px 5px 0 0"></div>
<div class="t" style="left:282px;top:781.34px;width:74px;text-align:center;font-size:12px;line-height:12px;color:#1a1a1a">Zdroje fin.</div>
<div style="left:359.5px;top:774.5px;width:74px;height:23px;background:#d8d8d8;border:1px solid #f4f4f4;border-bottom:none;border-radius:5px 5px 0 0;box-sizing:border-box"></div>
<div class="t" style="left:359.5px;top:781.34px;width:74px;text-align:center;font-size:12px;line-height:12px;color:#1a1a1a">Sazby DPH</div>
<div style="left:436.25px;top:775px;width:74px;height:21px;background:#94a3b8;border-radius:5px 5px 0 0"></div>
<div class="t" style="left:436.25px;top:781.34px;width:74px;text-align:center;font-size:12px;line-height:12px;color:#1a1a1a">Bank.účty</div>
<div style="left:514.5px;top:775px;width:74px;height:21px;background:#94a3b8;border-radius:5px 5px 0 0"></div>
<div class="t" style="left:514.5px;top:781.34px;width:74px;text-align:center;font-size:12px;line-height:12px;color:#1a1a1a">Události</div>
<div style="left:592px;top:775px;width:74px;height:21px;background:#94a3b8;border-radius:5px 5px 0 0"></div>
<div class="t" style="left:592px;top:781.34px;width:74px;text-align:center;font-size:12px;line-height:12px;color:#1a1a1a">Organizace</div>
<div style="left:669.25px;top:775px;width:74px;height:21px;background:#94a3b8;border-radius:5px 5px 0 0"></div>
<div class="t" style="left:669.25px;top:781.34px;width:74px;text-align:center;font-size:12px;line-height:12px;color:#1a1a1a">Dokumenty</div>
<div style="left:746.25px;top:775px;width:74px;height:21px;background:#94a3b8;border-radius:5px 5px 0 0"></div>
<div class="t" style="left:746.25px;top:781.34px;width:74px;text-align:center;font-size:12px;line-height:12px;color:#1a1a1a">Majetek</div>
<div style="left:823.25px;top:775px;width:74px;height:21px;background:#94a3b8;border-radius:5px 5px 0 0"></div>
<div class="t" style="left:823.25px;top:781.34px;width:74px;text-align:center;font-size:12px;line-height:12px;color:#1a1a1a">Ostatní</div>
<div style="left:900.75px;top:775px;width:74px;height:21px;background:#94a3b8;border-radius:5px 5px 0 0"></div>
<div class="t" style="left:900.75px;top:781.34px;width:74px;text-align:center;font-size:12px;line-height:12px;color:#1a1a1a">Rozpočty</div>
<div class="t" style="left:91.25px;top:813.99px;font-size:11px;line-height:11px;font-weight:bold;color:#1e1e1e;">Zd.</div>
<div class="t" style="left:91.25px;top:828.99px;font-size:11px;line-height:11px;font-weight:bold;color:#1e1e1e;">pln.</div>
<div class="t" style="left:119.5px;top:828.99px;font-size:11px;line-height:11px;font-weight:bold;color:#1e1e1e;letter-spacing:-0.233px;">Sazba v %</div>
<div class="t" style="left:191.25px;top:828.99px;font-size:11px;line-height:11px;font-weight:bold;color:#1e1e1e;">Popis sazby DPH</div>
<div class="t" style="left:446.25px;top:813.99px;font-size:11px;line-height:11px;font-weight:bold;color:#1e1e1e;">Platnost sazby</div>
<div class="t" style="left:452px;top:828.99px;font-size:11px;line-height:11px;font-weight:bold;color:#1e1e1e;">Od</div>
<div class="t" style="left:500.5px;top:828.99px;font-size:11px;line-height:11px;font-weight:bold;color:#1e1e1e;">Do</div>
<div class="t" style="left:554.5px;top:828.99px;font-size:11px;line-height:11px;font-weight:bold;color:#1e1e1e;">NS</div>
<div class="t" style="left:611.25px;top:828.99px;font-size:11px;line-height:11px;font-weight:bold;color:#1e1e1e;">TA</div>
<div class="t" style="left:648.75px;top:828.99px;font-size:11px;line-height:11px;font-weight:bold;color:#1e1e1e;">Akce</div>
<div class="t" style="left:823.2px;top:828.99px;font-size:11px;line-height:11px;font-weight:bold;color:#1e1e1e;">KP</div>
<div class="if" style="left:74px;top:845.5px;width:13px;height:16px;background:#c2e0fc;"></div>
<div class="if" style="left:92px;top:845.5px;width:21px;height:16px;background:#c2e0fc;"></div>
<div class="t" style="left:95px;top:850.27px;font-size:11.5px;line-height:11.5px;color:#1a1a1a;width:19px;overflow:hidden;">P</div>
<div class="if" style="left:119.5px;top:845.5px;width:66px;height:16px;background:#c2e0fc;"></div>
<div class="t" style="left:122.5px;top:850.27px;font-size:11.5px;line-height:11.5px;color:#1a1a1a;width:64px;overflow:hidden;">0</div>
<div style="left:190.75px;top:845.5px;width:255px;height:19px;background:#c2e0fc;border:1px solid #e02828;box-sizing:border-box"></div>
<div class="t" style="left:194.5px;top:850.69px;font-size:11px;line-height:11px;color:#1a1a1a;letter-spacing:-0.414px;">0% - PDP</div>
<div class="if" style="left:447px;top:845.5px;width:48px;height:16px;background:#c2e0fc;"></div>
<div class="if" style="left:500px;top:845.5px;width:49.5px;height:16px;background:#c2e0fc;"></div>
<div class="if" style="left:554.5px;top:845.5px;width:51px;height:16px;background:#c2e0fc;"></div>
<div class="if" style="left:611.25px;top:845.5px;width:33px;height:16px;background:#c2e0fc;"></div>
<div class="if" style="left:648.75px;top:845.5px;width:170px;height:16px;background:#c2e0fc;"></div>
<div class="if" style="left:823.2px;top:845.5px;width:108px;height:16px;background:#c2e0fc;"></div>
</body></html>
